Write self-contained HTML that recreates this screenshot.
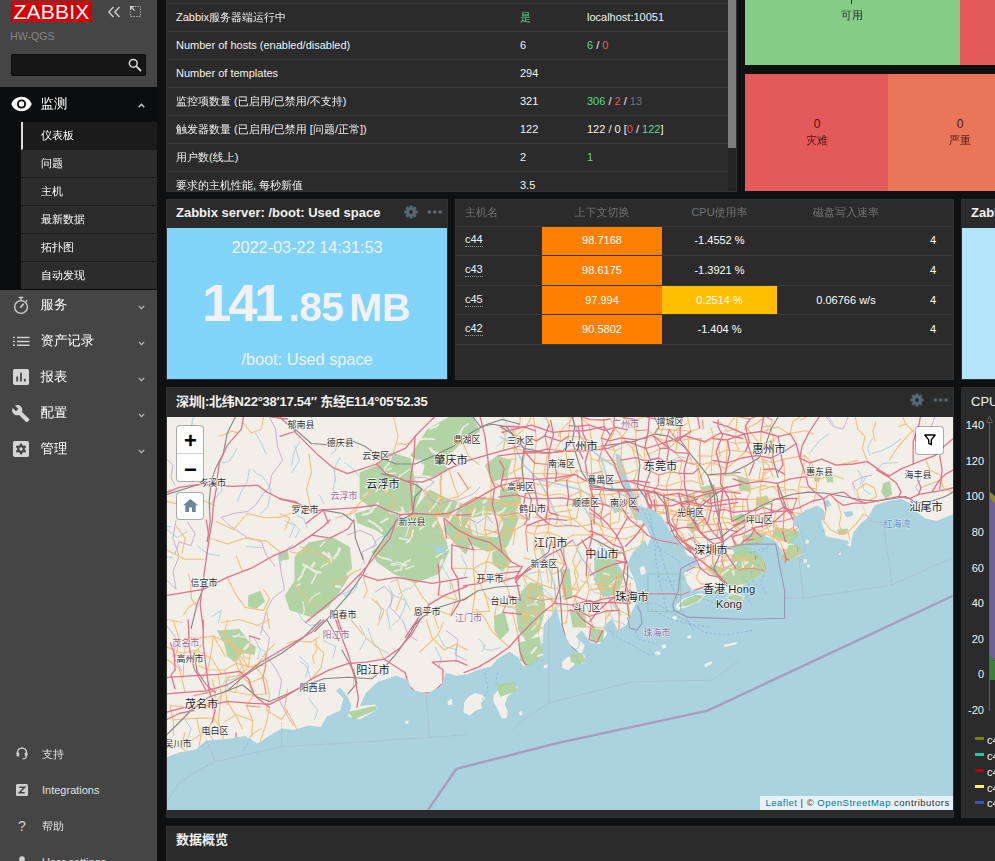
<!DOCTYPE html>
<html lang="zh-CN">
<head>
<meta charset="utf-8">
<title>Zabbix Dashboard</title>
<style>
*{box-sizing:border-box;margin:0;padding:0}
html,body{width:995px;height:861px;overflow:hidden;background:#0e1012}
body{position:relative;font-family:"Liberation Sans","WenQuanYi Zen Hei","Noto Sans CJK SC",sans-serif;font-size:11px;color:#f2f2f2;line-height:1}
.abs{position:absolute}
/* sidebar */
#sb{position:absolute;left:0;top:0;width:157px;height:861px;background:#454545;overflow:hidden}
#logo{position:absolute;left:11px;top:1px;width:81px;height:21px;background:#d40000;color:#fff;font-size:21px;line-height:22px;text-align:center;letter-spacing:.2px}
#srv{position:absolute;left:10px;top:30px;font-size:10.6px;color:#858585;line-height:12px}
#search{position:absolute;left:11px;top:54px;width:135px;height:22px;background:#161616;border:1px solid #0c0c0c;border-radius:2px}
.mrow{position:absolute;left:0;width:157px;height:36px}
.mrow .t{position:absolute;left:40.5px;top:11px;font-size:13.4px;line-height:14px;color:#fff}
.mrow svg.ic{position:absolute}
.car{position:absolute;left:138px;width:7px;height:5px}
.sub{position:absolute;left:21px;width:136px;height:28px;background:#2c2c2c;border-bottom:1px solid #191919;font-size:11px;line-height:27px;padding-left:20px;color:#fff}
.sub.sel{background:#1b1b1b;border-left:2px solid #dcdcdc;padding-left:18px}
.brow{position:absolute;left:0;width:157px;height:36px}
.brow .t{position:absolute;left:42px;top:12px;font-size:11px;line-height:12px;color:#e0e0e0}
/* widgets */
.w{position:absolute;background:#2b2b2b;border:1px solid #303030;overflow:hidden}
.wh{position:absolute;left:9px;font-family:"Liberation Sans","Noto Sans CJK SC",sans-serif;font-weight:bold;font-size:13px;line-height:14px;color:#f2f2f2;white-space:nowrap}
.row{position:absolute;left:0;height:28px;border-top:1px solid #383838;line-height:27px;white-space:nowrap}
.row span{position:absolute;top:0}
i{font-style:normal}
.g{color:#59db8f}.r{color:#e45959}.gy{color:#737373}
.cell{position:absolute;text-align:center;line-height:29px;font-size:11px;color:#fff;white-space:nowrap}
.lc{background:#fff;border:1px solid rgba(0,0,0,.28);border-radius:4px;background-clip:padding-box}
.lt{width:27px;height:28px;text-align:center;font:bold 22px/26px "Liberation Sans",sans-serif;color:#000}
.hl{position:absolute;height:1px;background:#383838}
.hn{line-height:27px;color:#f2f2f2}
.hn::after{content:"";position:absolute;left:0;right:0;top:20px;border-bottom:1px dotted #9a9a9a}
</style>
</head>
<body>

<!-- ============ SIDEBAR ============ -->
<div id="sb">
  <div id="logo">ZABBIX</div>
  <svg class="abs" style="left:107px;top:6px" width="14" height="12" viewBox="0 0 14 12"><path d="M6.5 1 L1.8 6 L6.5 11 M12.5 1 L7.8 6 L12.5 11" fill="none" stroke="#c8c8c8" stroke-width="1.5"/></svg>
  <svg class="abs" style="left:129px;top:5px" width="13" height="13" viewBox="0 0 13 13"><path d="M5.5 1.5H11.5V11.5H1.5V6.5" fill="none" stroke="#b0b0b0" stroke-width="1" stroke-dasharray="1.5 1.2"/><path d="M1 1H5V2.2H3.1L6 5.1L5.1 6L2.2 3.1V5H1Z" fill="#d0d0d0"/></svg>
  <div id="srv">HW-QGS</div>
  <div id="search"></div>
  <svg class="abs" style="left:128px;top:58px" width="14" height="14" viewBox="0 0 14 14"><circle cx="5.3" cy="5.3" r="3.9" fill="none" stroke="#dcdcdc" stroke-width="1.5"/><path d="M8.2 8.2L13 13" stroke="#dcdcdc" stroke-width="1.8"/></svg>

  <!-- active section -->
  <div class="abs" style="left:0;top:87px;width:157px;height:203px;background:#0b0c0d"></div>
  <div class="mrow" style="top:87px">
    <svg class="ic" style="left:11px;top:9px" width="21" height="16" viewBox="0 0 21 16"><path d="M10.5 0.8C5.8 0.8 1.9 3.7 0.3 8c1.6 4.3 5.5 7.2 10.2 7.2S19.1 12.300 20.700 8C19.1 3.7 15.2 0.8 10.5 0.8z" fill="#fff"/><circle cx="10.500" cy="8" r="4.600" fill="#0b0c0d"/><circle cx="10.500" cy="8" r="2.700" fill="#fff"/></svg>
    <div class="t" style="top:10px">监测</div>
    <svg class="car" style="top:16px" viewBox="0 0 7 5"><path d="M0.700 4.300L3.500 1.300L6.300 4.300" fill="none" stroke="#cfcfcf" stroke-width="1.300"/></svg>
  </div>
  <div class="sub sel" style="top:122px">仪表板</div>
  <div class="sub" style="top:150px">问题</div>
  <div class="sub" style="top:178px">主机</div>
  <div class="sub" style="top:206px">最新数据</div>
  <div class="sub" style="top:234px">拓扑图</div>
  <div class="sub" style="top:262px;height:27px;border-bottom:0">自动发现</div>

  <div class="mrow" style="top:287px">
    <svg class="ic" style="left:12px;top:9px" width="18" height="19" viewBox="0 0 18 19"><circle cx="9" cy="11" r="6.400" fill="none" stroke="#cfcfcf" stroke-width="1.400"/><path d="M6.800 1.500H11.200" stroke="#cfcfcf" stroke-width="1.500"/><path d="M9 1.500V4.500" stroke="#cfcfcf" stroke-width="1.200"/><path d="M8.300 11.700L11.600 7.800" stroke="#cfcfcf" stroke-width="1.700"/><path d="M13.800 5.600L15.200 4.200" stroke="#cfcfcf" stroke-width="1.400"/></svg>
    <div class="t">服务</div>
    <svg class="car" style="top:18px" viewBox="0 0 7 5"><path d="M0.900 1L3.500 3.700L6.100 1" fill="none" stroke="#b8b8b8" stroke-width="1.150"/></svg>
  </div>
  <div class="mrow" style="top:323px">
    <svg class="ic" style="left:12.500px;top:13px" width="17" height="11" viewBox="0 0 17 11"><path d="M0 1.500H1.800M4 1.500H16.500M0 5.400H1.800M4 5.400H16.500M0 9.300H1.800M4 9.300H16.500" stroke="#d0d0d0" stroke-width="1.500"/></svg>
    <div class="t">资产记录</div>
    <svg class="car" style="top:18px" viewBox="0 0 7 5"><path d="M0.900 1L3.500 3.700L6.100 1" fill="none" stroke="#b8b8b8" stroke-width="1.150"/></svg>
  </div>
  <div class="mrow" style="top:359px">
    <svg class="ic" style="left:13px;top:10px" width="16" height="16" viewBox="0 0 16 16"><rect x="0" y="0" width="16" height="16" rx="1.800" fill="#d6d6d6"/><path d="M4.200 12.500V7.500M8 12.500V3.800M11.800 12.500V9.800" stroke="#454545" stroke-width="1.800"/></svg>
    <div class="t">报表</div>
    <svg class="car" style="top:18px" viewBox="0 0 7 5"><path d="M0.900 1L3.500 3.700L6.100 1" fill="none" stroke="#b8b8b8" stroke-width="1.150"/></svg>
  </div>
  <div class="mrow" style="top:395px">
    <svg class="ic" style="left:12px;top:9px" width="18" height="18" viewBox="0 0 18 18"><path d="M17.200 15.100L10 7.900c0.700-1.800 0.300-3.900-1.200-5.400C7.200 0.900 4.900 0.600 3 1.500l3.400 3.400L4 7.300 0.600 3.900C-0.300 5.800 0 8.100 1.600 9.700c1.500 1.500 3.600 1.900 5.400 1.200l7.200 7.200c0.300 0.300 0.800 0.300 1.100 0l1.900-1.900C17.500 15.900 17.500 15.400 17.200 15.100z" fill="#d6d6d6"/></svg>
    <div class="t">配置</div>
    <svg class="car" style="top:18px" viewBox="0 0 7 5"><path d="M0.900 1L3.500 3.700L6.100 1" fill="none" stroke="#b8b8b8" stroke-width="1.150"/></svg>
  </div>
  <div class="mrow" style="top:431px">
    <svg class="ic" style="left:13px;top:10px" width="16" height="16" viewBox="0 0 16 16"><rect x="0" y="0" width="16" height="16" rx="1.800" fill="#d6d6d6"/><g transform="translate(8 8)" fill="#454545"><circle r="3.900"/><rect x="-1.100" y="-5.400" width="2.200" height="10.800"/><rect x="-1.100" y="-5.400" width="2.200" height="10.800" transform="rotate(60)"/><rect x="-1.100" y="-5.400" width="2.200" height="10.800" transform="rotate(120)"/><circle r="1.700" fill="#d6d6d6"/></g></svg>
    <div class="t">管理</div>
    <svg class="car" style="top:18px" viewBox="0 0 7 5"><path d="M0.900 1L3.500 3.700L6.100 1" fill="none" stroke="#b8b8b8" stroke-width="1.150"/></svg>
  </div>

  <div class="brow" style="top:736px">
    <svg class="abs" style="left:16px;top:11px" width="12" height="13" viewBox="0 0 12 13"><path d="M1.500 7V5.500a4.500 4.500 0 0 1 9 0V7" fill="none" stroke="#d0d0d0" stroke-width="1.500"/><rect x="0.600" y="5.500" width="2.600" height="4" rx="0.800" fill="#d0d0d0"/><rect x="8.800" y="5.500" width="2.600" height="4" rx="0.800" fill="#d0d0d0"/><path d="M10.300 9.500c0 1.800-1.500 2.400-3.800 2.400" fill="none" stroke="#d0d0d0" stroke-width="1.100"/></svg>
    <div class="t">支持</div>
  </div>
  <div class="brow" style="top:772px">
    <svg class="abs" style="left:16px;top:12px" width="12" height="12" viewBox="0 0 12 12"><rect width="12" height="12" rx="1.500" fill="#d0d0d0"/><path d="M3.300 3.200H8.700L3.300 8.800H8.700" fill="none" stroke="#454545" stroke-width="1.500"/></svg>
    <div class="t">Integrations</div>
  </div>
  <div class="brow" style="top:808px">
    <div class="abs" style="left:18px;top:10px;font-size:14px;line-height:16px;color:#d0d0d0">?</div>
    <div class="t">帮助</div>
  </div>
  <div class="brow" style="top:844px">
    <svg class="abs" style="left:16px;top:12px" width="12" height="12" viewBox="0 0 12 12"><circle cx="6" cy="3" r="2.800" fill="#d0d0d0"/><path d="M0.500 12c0-3.500 2.500-5 5.500-5s5.500 1.500 5.500 5z" fill="#d0d0d0"/></svg>
    <div class="t">User settings</div>
  </div>
</div>

<!-- ============ WIDGET: system info ============ -->
<div class="w" style="left:166px;top:-10px;width:571px;height:202px" id="w1">
  <div class="row" style="top:12px;width:561px"><span style="left:9px">Zabbix服务器端运行中</span><span class="g" style="left:353px">是</span><span style="left:420px">localhost:10051</span></div>
  <div class="row" style="top:40px;width:561px"><span style="left:9px">Number of hosts (enabled/disabled)</span><span style="left:353px">6</span><span style="left:420px"><i class="g">6</i> / <i class="r">0</i></span></div>
  <div class="row" style="top:68px;width:561px"><span style="left:9px">Number of templates</span><span style="left:353px">294</span></div>
  <div class="row" style="top:96px;width:561px"><span style="left:9px">监控项数量 (已启用/已禁用/不支持)</span><span style="left:353px">321</span><span style="left:420px"><i class="g">306</i> / <i class="r">2</i> / <i class="gy">13</i></span></div>
  <div class="row" style="top:124px;width:561px"><span style="left:9px">触发器数量 (已启用/已禁用 [问题/正常])</span><span style="left:353px">122</span><span style="left:420px">122 / 0 [<i class="r">0</i> / <i class="g">122</i>]</span></div>
  <div class="row" style="top:152px;width:561px"><span style="left:9px">用户数(线上)</span><span style="left:353px">2</span><span class="g" style="left:420px">1</span></div>
  <div class="row" style="top:180px;width:561px"><span style="left:9px">要求的主机性能, 每秒新值</span><span style="left:353px">3.5</span></div>
  <div class="abs" style="left:561px;top:0;width:8px;height:202px;background:#252527"></div>
  <div class="abs" style="left:561px;top:0;width:8px;height:157px;background:#7c7c7e"></div>
</div>

<!-- ============ WIDGET: host availability / severity ============ -->
<div class="abs" style="left:745px;top:0;width:215px;height:65px;background:#86cc89"></div>
<div class="abs" style="left:960px;top:0;width:35px;height:65px;background:#e45959"></div>
<div class="abs" style="left:851px;top:-4px;width:1px;height:8px;background:#1f2a1f"></div>
<div class="abs" style="left:812px;top:9px;width:80px;text-align:center;font-size:11px;line-height:12px;color:#1f2a1f">可用</div>
<div class="abs" style="left:745px;top:74px;width:143px;height:117px;background:#e45959"></div>
<div class="abs" style="left:888px;top:74px;width:107px;height:117px;background:#e97659"></div>
<div class="abs" style="left:777px;top:118px;width:80px;text-align:center;font-size:12px;line-height:13px;color:#4b1111">0</div>
<div class="abs" style="left:777px;top:134px;width:80px;text-align:center;font-size:11px;line-height:12px;color:#4b1111">灾难</div>
<div class="abs" style="left:920px;top:118px;width:80px;text-align:center;font-size:12px;line-height:13px;color:#4b1a11">0</div>
<div class="abs" style="left:920px;top:134px;width:80px;text-align:center;font-size:11px;line-height:12px;color:#4b1a11">严重</div>

<!-- ============ WIDGET: item value ============ -->
<div class="w" style="left:166px;top:199px;width:282px;height:181px">
  <div class="wh" style="top:6px">Zabbix server: /boot: Used space</div>
  <svg class="abs" style="left:237.2px;top:5.4px" width="14" height="14" viewBox="-7 -7 14 14"><g fill="#5a6a73"><rect x="-1.500" y="-6.600" width="3" height="13.200" rx=".3" transform="rotate(0)"/><rect x="-1.500" y="-6.600" width="3" height="13.200" rx=".3" transform="rotate(45)"/><rect x="-1.500" y="-6.600" width="3" height="13.200" rx=".3" transform="rotate(90)"/><rect x="-1.500" y="-6.600" width="3" height="13.200" rx=".3" transform="rotate(135)"/><circle r="4.700"/></g><circle r="1.900" fill="#2b2b2b"/></svg><svg class="abs" style="left:259.5px;top:10px" width="16" height="4" viewBox="0 0 16 4"><g fill="#5a6a73"><circle cx="2.300" cy="2" r="1.800"/><circle cx="7.700" cy="2" r="1.800"/><circle cx="13.100" cy="2" r="1.800"/></g></svg>
  <div class="abs" style="left:0;top:28px;width:280px;height:151px;background:#81d4fa"></div>
  <div class="abs" style="left:0;top:38px;width:280px;text-align:center;font-size:16.3px;line-height:18px;color:#f2f2f2">2022-03-22 14:31:53</div>
  <div class="abs" style="left:0;top:73px;width:280px;padding-left:35.3px;font-weight:bold;color:#f2f2f2;white-space:nowrap;line-height:60px"><span style="font-size:52.5px;letter-spacing:-3.2px">141</span><span style="font-size:40.5px;letter-spacing:-.5px;margin-left:8.2px">.85</span><span style="font-size:39.5px;letter-spacing:-.3px;margin-left:6px">MB</span></div>
  <div class="abs" style="left:0;top:150px;width:280px;text-align:center;font-size:16.3px;line-height:18px;color:#f2f2f2">/boot: Used space</div>
</div>

<!-- ============ WIDGET: data table ============ -->
<div class="w" style="left:455px;top:199px;width:499px;height:181px" id="w3">
  <div class="abs gy" style="left:9px;top:6px;line-height:13px">主机名</div>
  <div class="abs gy" style="left:86px;top:6px;width:120px;text-align:center;line-height:13px">上下文切换</div>
  <div class="abs gy" style="left:206px;top:6px;width:115px;text-align:center;line-height:13px">CPU使用率</div>
  <div class="abs gy" style="left:321px;top:6px;width:138px;text-align:center;line-height:13px">磁盘写入速率</div>
  <div class="hl" style="left:0;top:26px;width:497px"></div>
  <div class="hl" style="left:0;top:55px;width:497px"></div>
  <div class="hl" style="left:0;top:85px;width:497px"></div>
  <div class="hl" style="left:0;top:114px;width:497px"></div>
  <div class="hl" style="left:0;top:144px;width:497px"></div>
  <div class="abs hn" style="left:9px;top:26px">c44</div>
  <div class="abs hn" style="left:9px;top:56px">c43</div>
  <div class="abs hn" style="left:9px;top:86px">c45</div>
  <div class="abs hn" style="left:9px;top:115px">c42</div>
  <div class="cell" style="left:86px;top:27px;width:120px;height:28px;line-height:27px;background:#ff8000">98.7168</div>
  <div class="cell" style="left:86px;top:56px;width:120px;height:29px;background:#ff8000">98.6175</div>
  <div class="cell" style="left:86px;top:86px;width:120px;height:28px;background:#ff8000">97.994</div>
  <div class="cell" style="left:86px;top:115px;width:120px;height:29px;background:#ff8000">90.5802</div>
  <div class="cell" style="left:206px;top:27px;width:115px;height:28px;line-height:27px">-1.4552 %</div>
  <div class="cell" style="left:206px;top:56px;width:115px;height:29px">-1.3921 %</div>
  <div class="cell" style="left:206px;top:86px;width:115px;height:28px;background:#ffbf00">0.2514 %</div>
  <div class="cell" style="left:206px;top:115px;width:115px;height:29px">-1.404 %</div>
  <div class="cell" style="left:321px;top:86px;width:138px;height:28px">0.06766 w/s</div>
  <div class="cell" style="left:459px;top:27px;width:36px;height:28px;line-height:27px">4</div>
  <div class="cell" style="left:459px;top:56px;width:36px;height:29px">4</div>
  <div class="cell" style="left:459px;top:86px;width:36px;height:28px">4</div>
  <div class="cell" style="left:459px;top:115px;width:36px;height:29px">4</div>
</div>

<!-- ============ WIDGET: right partial (item value) ============ -->
<div class="w" style="left:961px;top:199px;width:60px;height:181px">
  <div class="wh" style="top:6px">Zabbix</div>
  <div class="abs" style="left:0;top:28px;width:60px;height:151px;background:#b3e5fc"></div>
</div>

<!-- ============ WIDGET: map ============ -->
<div class="w" style="left:166px;top:387px;width:788px;height:431px" id="wmap">
  <div class="wh" style="top:7px;letter-spacing:-.24px">深圳|:北纬N22°38′17.54″ 东经E114°05′52.35</div>
  <svg class="abs" style="left:743.3px;top:5px" width="14" height="14" viewBox="-7 -7 14 14"><g fill="#5a6a73"><rect x="-1.500" y="-6.600" width="3" height="13.200" rx=".3" transform="rotate(0)"/><rect x="-1.500" y="-6.600" width="3" height="13.200" rx=".3" transform="rotate(45)"/><rect x="-1.500" y="-6.600" width="3" height="13.200" rx=".3" transform="rotate(90)"/><rect x="-1.500" y="-6.600" width="3" height="13.200" rx=".3" transform="rotate(135)"/><circle r="4.700"/></g><circle r="1.900" fill="#2b2b2b"/></svg><svg class="abs" style="left:765.5px;top:10px" width="16" height="4" viewBox="0 0 16 4"><g fill="#5a6a73"><circle cx="2.300" cy="2" r="1.800"/><circle cx="7.700" cy="2" r="1.800"/><circle cx="13.100" cy="2" r="1.800"/></g></svg>
<!--MAP-START-->
<svg class="abs" style="left:0;top:29px" width="786" height="393" viewBox="167 417 786 393" font-family="'Liberation Sans','Noto Sans CJK SC',sans-serif">
<defs><clipPath id="land"><path d="M167 757.2 L179.1 752.6 L195.6 749.6 L206.2 740.6 L227.3 739.1 L245.4 736.1 L257.4 743.6 L266.5 737.6 L281.6 728.5 L293.6 730 L308.7 725.5 L320.8 727 L326.8 716.5 L340.3 710.4 L343.4 698.4 L335.8 690.8 L340.3 687.8 L347.9 696.9 L351.5 705.9 L347.9 716.5 L359.9 719.5 L378 708.9 L375 704.4 L359.9 705.9 L366 692.4 L378 681.8 L396.1 675.8 L408.2 680.3 L411.2 689.3 L426.3 693.9 L441.3 686.3 L445.9 672.8 L456.4 675.8 L467 674.3 L467.1 674.2 L479.2 669.6 L491.3 666.6 L497.3 659.1 L509.3 651.5 L518.4 657.6 L522.9 666.6 L536.5 660.6 L542.5 642.5 L544 624.4 L551.5 615.4 L556.1 604.8 L559.1 618.4 L563.6 633.5 L572.6 648.5 L581.7 654.6 L584.7 645.5 L575.7 636.5 L581.7 630.4 L590.7 642.5 L599.8 644 L607.3 633.5 L602.8 627.4 L611.8 618.4 L617.9 630.4 L626.9 624.4 L632.9 609.3 L637.5 600.3 L636 585.2 L632.9 576.2 L626.9 564.1 L632.9 552.1 L645 540 L647.5 546.3 L650.8 537.5 L645.3 524.2 L637.5 517.6 L639.7 506.5 L651.9 508.7 L660.7 515.4 L667.4 526.4 L674 537.5 L682.9 546.3 L687.3 555.2 L693.9 557.4 L698.3 564 L689.5 568.4 L684 572.9 L687.3 583.9 L693.9 590.5 L709.4 590.5 L722.7 590.5 L731.5 595 L744.8 583.9 L758 577.3 L766.9 568.4 L762.5 557.4 L749.2 554.1 L742.6 557.4 L733.7 553 L731.5 546.3 L744.8 544.1 L758 544.1 L752.9 538.5 L766.2 536.3 L775 540.7 L781.6 549.6 L785 562.9 L792.7 558.4 L803.7 554 L797.1 545.2 L788.3 543 L799.3 529.7 L792.7 523.1 L794.9 516.4 L808.2 509.8 L817 505.4 L823.6 509.8 L821.4 520.9 L825.9 536.3 L836.9 538.5 L848 540.7 L850.2 546.3 L853.5 531.9 L861.2 523.1 L867.9 517.5 L874.5 505.4 L887.8 501 L901 498.7 L909.9 503.2 L916.5 512 L925.4 518.6 L936.4 520.9 L953 514.2 L953 417 L953 400 L167 400 Z"/></clipPath></defs>
<rect x="167" y="417" width="786" height="393" fill="#aad3df"/>
<path d="M167 757.2 L179.1 752.6 L195.6 749.6 L206.2 740.6 L227.3 739.1 L245.4 736.1 L257.4 743.6 L266.5 737.6 L281.6 728.5 L293.6 730 L308.7 725.5 L320.8 727 L326.8 716.5 L340.3 710.4 L343.4 698.4 L335.8 690.8 L340.3 687.8 L347.9 696.9 L351.5 705.9 L347.9 716.5 L359.9 719.5 L378 708.9 L375 704.4 L359.9 705.9 L366 692.4 L378 681.8 L396.1 675.8 L408.2 680.3 L411.2 689.3 L426.3 693.9 L441.3 686.3 L445.9 672.8 L456.4 675.8 L467 674.3 L467.1 674.2 L479.2 669.6 L491.3 666.6 L497.3 659.1 L509.3 651.5 L518.4 657.6 L522.9 666.6 L536.5 660.6 L542.5 642.5 L544 624.4 L551.5 615.4 L556.1 604.8 L559.1 618.4 L563.6 633.5 L572.6 648.5 L581.7 654.6 L584.7 645.5 L575.7 636.5 L581.7 630.4 L590.7 642.5 L599.8 644 L607.3 633.5 L602.8 627.4 L611.8 618.4 L617.9 630.4 L626.9 624.4 L632.9 609.3 L637.5 600.3 L636 585.2 L632.9 576.2 L626.9 564.1 L632.9 552.1 L645 540 L647.5 546.3 L650.8 537.5 L645.3 524.2 L637.5 517.6 L639.7 506.5 L651.9 508.7 L660.7 515.4 L667.4 526.4 L674 537.5 L682.9 546.3 L687.3 555.2 L693.9 557.4 L698.3 564 L689.5 568.4 L684 572.9 L687.3 583.9 L693.9 590.5 L709.4 590.5 L722.7 590.5 L731.5 595 L744.8 583.9 L758 577.3 L766.9 568.4 L762.5 557.4 L749.2 554.1 L742.6 557.4 L733.7 553 L731.5 546.3 L744.8 544.1 L758 544.1 L752.9 538.5 L766.2 536.3 L775 540.7 L781.6 549.6 L785 562.9 L792.7 558.4 L803.7 554 L797.1 545.2 L788.3 543 L799.3 529.7 L792.7 523.1 L794.9 516.4 L808.2 509.8 L817 505.4 L823.6 509.8 L821.4 520.9 L825.9 536.3 L836.9 538.5 L848 540.7 L850.2 546.3 L853.5 531.9 L861.2 523.1 L867.9 517.5 L874.5 505.4 L887.8 501 L901 498.7 L909.9 503.2 L916.5 512 L925.4 518.6 L936.4 520.9 L953 514.2 L953 417 L953 400 L167 400 Z" fill="#f2efe9"/>
<polygon points="675.1,606.5 678.4,602.7 682.9,598.9 689.5,596.7 696.1,593.9 701.7,593.2 705.4,595 702.8,598.3 698.8,602 693.5,603.8 687.3,607.1 681.8,608.2 678.4,610.4" fill="#f2efe9"/>
<polygon points="725.3,597.6 729.3,595 734.8,593.9 740.3,594.5 744.8,596.3 743,600.1 738.1,599.4 733.7,601.2 728.8,600.5" fill="#f2efe9"/>
<polygon points="464.1,702.8 468.6,696.8 474.7,693.2 482.2,694.4 485.2,698.3 480.7,702.8 482.2,708.8 476.2,710.3 470.1,715.5 463.5,712.4" fill="#f2efe9"/>
<polygon points="493.7,695.3 498.8,689.2 504.8,685.3 513.9,683.5 517.8,687.7 512.4,692.2 507.8,696.8 504.8,704.3 507.8,711.8 506.9,717.9 501.8,718.5 498.8,711.8 495.8,705.8 492.8,699.8" fill="#f2efe9"/>
<polygon points="562.1,662.1 566.6,657.6 572.6,655.2 577.2,659.1 574.2,665.1 568.1,670.2 562.1,668.1" fill="#f2efe9"/>
<polygon points="578.1,654 584.1,654.6 586.2,660 581.7,664.2 578.1,660.6" fill="#f2efe9"/>
<polygon points="639.6,567.7 644.4,565.9 646.2,573.2 641.4,575.6" fill="#f2efe9"/>
<polygon points="654.7,652.1 659.5,650.9 660.7,654.6 655.9,655.8" fill="#f2efe9"/>
<polygon points="661.6,645.5 665.5,644.3 666.1,647.9 662.5,648.5" fill="#f2efe9"/>
<polygon points="704.1,664.2 711.3,661.2 712.5,663.6 705.3,667.2" fill="#f2efe9"/>
<polygon points="723.4,644.9 737,641.9 736.1,644.3 724.9,647" fill="#f2efe9"/>
<polygon points="687.2,635.9 690.8,635 691.4,638 687.8,638.6" fill="#f2efe9"/>
<polygon points="672.1,616.9 675.8,615.4 677,619 673.3,619.9" fill="#f2efe9"/>
<polygon points="544,665.1 547.9,664.2 547.3,668.1 543.7,668.4" fill="#f2efe9"/>
<polygon points="447.5,701.3 450.6,699.8 451.5,704.3 448.1,705.2" fill="#f2efe9"/>
<polygon points="519,711.8 522,711.2 522.6,714.9 519.6,715.5" fill="#f2efe9"/>
<polygon points="806,539.6 809.3,540.7 808.2,544.1 804.9,543" fill="#f2efe9"/>
<polygon points="846.9,544.1 851.3,543 850.2,547.4" fill="#f2efe9"/>
<polygon points="838.7,552.9 840.9,552.5 841.1,554.5 838.9,554.7" fill="#f2efe9"/>
<polygon points="803.3,559.5 806.4,558.9 807.1,562.4 803.7,562.9" fill="#f2efe9"/>
<polygon points="807.1,565.1 809.5,564.6 809.7,567.3 807.3,567.5" fill="#f2efe9"/>
<polygon points="689.9,586.6 693.9,584.4 696.1,588.3 692.1,590.5" fill="#f2efe9"/>
<polygon points="639.7,567.3 643.5,566.2 644.4,572.9 640.9,574.6" fill="#f2efe9"/>
<polygon points="448.9,699.9 451.9,699 452.5,704.4 449.5,705" fill="#f2efe9"/>
<polygon points="405.2,721 408.2,720.4 408.5,723.4 405.5,723.7" fill="#f2efe9"/>
<g fill="#add19e" opacity=".92">
<polygon points="359.6,472.5 376.5,465.2 393.4,453.2 410.2,458 415.1,479.7 422.3,489.4 415.1,508.7 434.4,513.5 441.6,528 448.8,552.1 439.2,573.8 415.1,583.4 393.4,573.8 376.5,561.7 371.7,552.1 386.1,537.6 376.5,530.4 357.2,523.1 354.8,513.5 371.7,508.7 359.6,499 359.6,484.5"/>
<polygon points="294.5,556.9 308.9,542.4 333.1,537.6 349.9,547.2 352.4,571.4 340.3,590.7 328.2,607.5 311.4,617.2 289.6,610 284.8,595.5 294.5,581"/>
<polygon points="427.1,429.1 448.8,417 473,417 480.2,431.5 463.3,441.1 453.7,450.8 439.2,460.4 424.7,465.2 410.2,455.6 419.9,441.1"/>
<polygon points="485,465.2 497.1,455.6 511.5,460.4 506.7,477.3 492.3,482.1"/>
<polygon points="446.4,520.7 458.5,525.5 470.5,544.8 465.7,554.5 453.7,542.4 444,530.4"/>
<polygon points="415.1,508.7 429.5,489.4 448.8,499 463.3,503.8 448.8,518.3 434.4,515.9"/>
<polygon points="530.4,582.2 542.5,585.2 545.5,609.3 539.5,630.4 527.4,642.5 518.4,630.4 515.4,606.3 521.4,591.3"/>
<polygon points="519.9,642.5 539.5,636.5 544,654.6 530.4,666.6 519.9,660.6"/>
<polygon points="596.8,561.1 614.9,558.1 623.9,576.2 617.9,594.3 602.8,597.3 593.8,579.2"/>
<polygon points="560.6,570.1 569.6,568.6 572.6,597.3 563.6,600.3"/>
<polygon points="569.6,609.3 584.7,607.8 586.2,627.4 572.6,627.4"/>
<polygon points="494.3,615.4 504.8,612.4 509.3,630.4 500.3,639.5 494.3,630.4"/>
<polygon points="590.7,627.4 604.3,630.4 602.8,642.5 590.7,641"/>
<polygon points="569.6,654.6 581.7,653.1 586.2,660.6 578.7,665.1 571.1,662.1"/>
<polygon points="495.8,684.7 515.4,681.7 516.9,690.7 500.3,696.8"/>
<polygon points="440,540 446,540 449,552.1 440,555.1"/>
<polygon points="216.7,630.6 239.4,629 248.4,641.1 255.9,647.1 254.4,654.7 242.4,653.2 234.8,662.2 227.3,656.2 224.3,644.1"/>
<polygon points="347.9,712 375,705.9 378,708.9 353.9,719.5"/>
<polygon points="731.5,555.2 744.8,546.3 762.5,557.4 766.9,568.4 758,577.3 744.8,583.9 731.5,586.1 722.7,581.7 713.8,575.1 705,568.4 713.8,564 722.7,568.4 731.5,564"/>
<polygon points="678.4,606.5 684,599.8 696.1,595 703.9,595.4 698.3,601.2 687.3,606"/>
<polygon points="726,597.2 733.7,594.5 743.7,596.7 742.1,600.1 731.5,600.7"/>
<polygon points="771.3,535.3 789,530.9 800,535.3 789,544.1"/>
<polygon points="731.5,517.6 742.6,513.2 749.2,522 738.1,526.4"/>
<polygon points="755.8,497.7 766.9,495.5 771.3,504.3 760.2,506.5"/>
<polygon points="687.3,524.2 696.1,519.8 700.5,528.6 691.7,533.1"/>
<polygon points="731.5,546.3 742.6,541.9 744.8,546.3 735.9,550.7"/>
<polygon points="594.4,557.4 605.5,555.2 612.1,572.9 603.3,583.9 594.4,577.3"/>
<polygon points="612.1,504.3 618.7,502.1 621,511 614.3,513.2"/>
<polygon points="775,527.5 797.1,529.7 799.3,534.1 783.9,538.5 772.8,534.1"/>
<polygon points="788.3,545.2 797.1,544.1 803.7,552.9 792.7,558.4 785,562.9 780.5,556.2 786.1,551.8"/>
<polygon points="741.8,536.3 755.1,531.9 766.2,534.1 761.7,543 746.3,545.2"/>
<polygon points="883.3,483.3 890,481.1 892.2,494.3 885.6,498.7 881.1,492.1"/>
<polygon points="814.8,476.6 820.3,477.7 819.2,482.2 813.7,481.1"/>
<polygon points="825.9,476.6 832.5,475.5 833.6,482.2 827,482.2"/>
<polygon points="737.4,476.6 748.5,478.8 750.7,492.1 739.6,489.9"/>
<polygon points="757.3,496.5 766.2,498.7 764,507.6 756.2,505.4"/>
<polygon points="836.9,529.7 848,528.6 846.9,534.1 839.1,535.2"/>
<polygon points="500,489.4 514.5,486.9 521.7,499 514.5,513.5 500,511.1"/>
<polygon points="700.2,486.9 714.7,484.5 717.1,494.2 705,499"/>
<polygon points="683.3,496.6 695.4,494.2 693,503.8 685.7,503.8"/>
<polygon points="248.4,595.4 260.5,590.8 265,601.4 255.9,608.9 247.8,605.9"/>
<polygon points="278.5,553.2 287.6,550.1 289.1,559.2 280.1,560.7"/>
<polygon points="463.3,503.8 485,496.6 509.1,501.4 518.8,518.3 511.5,537.6 506.7,547.2 487.4,552.1 468.1,542.4 448.8,523.1 453.7,513.5"/>
<polygon points="492.3,552.1 504.3,547.2 511.5,561.7 501.9,571.4 492.3,564.1"/>
<polygon points="424.7,465.2 439.2,460.4 448.8,468.9 434.4,477.3 422.3,474.9"/>
</g>
<g fill="none" stroke="#f2efe9" stroke-linecap="round" stroke-linejoin="round" opacity=".85">
<path d="M397.3 526.1 L401.5 521.5 L405 517.3 L406.9 512.9" stroke-width="1.5"/>
<path d="M405.4 569.1 L410.7 567.1 L414.2 566.1" stroke-width="1.2"/>
<path d="M396.2 562.9 L401.7 564.2 L405.7 565" stroke-width="3.2"/>
<path d="M376.4 490.8 L380 485.6" stroke-width="2.0"/>
<path d="M363 496.5 L367.4 492.7" stroke-width="1.2"/>
<path d="M398.5 516.6 L404.4 516 L409.4 513.5 L412.5 510" stroke-width="1.6"/>
<path d="M391.9 564.4 L395.9 563.9" stroke-width="2.7"/>
<path d="M385.7 491.8 L387.6 488.3" stroke-width="2.4"/>
<path d="M389.7 512.2 L394.3 512.3 L398.5 513 L403.9 512.3" stroke-width="2.7"/>
<path d="M406.9 542.6 L409.3 540.6 L411.7 536.1 L413.1 530.4" stroke-width="2.0"/>
<path d="M394.4 571 L401.1 569.7" stroke-width="1.5"/>
<path d="M399.9 538.3 L406.4 539.5 L409.4 540.9" stroke-width="2.0"/>
<path d="M381.3 522.3 L387.2 518.7" stroke-width="2.5"/>
<path d="M419.8 529.3 L423.2 526.5" stroke-width="1.8"/>
<path d="M384 471 L384.9 467.9 L388.9 463.5 L391.2 457" stroke-width="1.9"/>
<path d="M362.8 514.8 L365.8 514.1 L368.8 513.4" stroke-width="2.5"/>
<path d="M365.7 486.7 L371.4 487.1 L376.3 487.2" stroke-width="2.3"/>
<path d="M403.6 520.2 L403.9 513.4 L401.9 507.6" stroke-width="2.5"/>
<path d="M400.5 569.9 L402.8 565.4 L405.7 562.1 L410.2 560" stroke-width="1.7"/>
<path d="M392.8 485.8 L397.4 486.1" stroke-width="2.4"/>
<path d="M384.5 470.9 L390.9 468.4" stroke-width="1.8"/>
<path d="M370.7 511.9 L373.6 507.7 L377.7 503.5" stroke-width="2.9"/>
<path d="M413.5 494.9 L414 489.1 L414.6 484.9 L415.9 482.1" stroke-width="1.5"/>
<path d="M405.1 536.5 L407.8 530.8 L409 525.1 L411.3 520.5" stroke-width="1.3"/>
<path d="M376.1 554.6 L382.2 558 L388.4 559.2 L392.1 560.6" stroke-width="2.0"/>
<path d="M397.1 478.8 L400.6 475.2 L404.4 473.1 L409.8 468.7" stroke-width="1.4"/>
<path d="M436.2 557.1 L442 553.3 L447.2 550" stroke-width="1.8"/>
<path d="M440.3 564.6 L442.4 559.9" stroke-width="2.7"/>
<path d="M368.8 520.5 L374.4 523.8 L379 527.2 L382.1 530.9" stroke-width="2.3"/>
<path d="M432.9 526.3 L436.3 521.8" stroke-width="2.4"/>
<path d="M383.4 471.6 L387.7 473.4 L390.7 473.5 L395.8 473" stroke-width="1.3"/>
<path d="M347.7 574.1 L351.2 571.5" stroke-width="3.0"/>
<path d="M320.3 546.2 L324.6 541.9" stroke-width="1.7"/>
<path d="M331.2 563.2 L330.8 557.3 L328.6 552.8" stroke-width="1.7"/>
<path d="M298.2 579.8 L301.5 575.9 L302.8 572.3 L305.4 567.4" stroke-width="2.3"/>
<path d="M297 585.6 L300.2 584" stroke-width="1.7"/>
<path d="M333.9 558.3 L337.6 553.7 L339.6 548.6" stroke-width="2.8"/>
<path d="M309 602.9 L310.6 598.9 L315.4 594.8 L320 592.9" stroke-width="1.2"/>
<path d="M336.3 586.4 L340.1 586.7" stroke-width="2.9"/>
<path d="M349.1 574.4 L351.2 570.5" stroke-width="2.5"/>
<path d="M312.4 566.2 L314.1 563.3" stroke-width="2.8"/>
<path d="M323.3 552.8 L326.4 554.4 L329.2 556.7" stroke-width="3.1"/>
<path d="M321.2 567 L324.2 564.8 L328.2 563.4" stroke-width="1.4"/>
<path d="M303.3 614.1 L304.3 610.5 L303.6 605.5 L303 601.7" stroke-width="1.4"/>
<path d="M311.5 583.4 L313.7 579.1 L316.5 573.8 L318.3 571.3" stroke-width="1.7"/>
<path d="M303.4 564.7 L309.7 567.9 L314.8 571.5 L320.1 572.5" stroke-width="2.7"/>
<path d="M421.4 439.7 L424.4 438.6 L429.1 438.9 L434.4 439.4" stroke-width="1.9"/>
<path d="M430.2 448.6 L432.9 451.8 L436.6 453.3 L440.2 453" stroke-width="2.7"/>
<path d="M437.5 460.3 L440.6 459.2" stroke-width="2.2"/>
<path d="M457 439 L459.7 433.5 L463.1 427.4 L468 424" stroke-width="1.7"/>
<path d="M418.2 460 L423.4 461.4" stroke-width="1.6"/>
<path d="M429.7 428.5 L436 426.7 L438.3 424.5" stroke-width="2.4"/>
<path d="M457.5 443.5 L458.3 439.2 L460.9 433.4" stroke-width="1.3"/>
<path d="M445.2 511.6 L448.7 506.5 L451.2 501.4" stroke-width="2.3"/>
<path d="M451.1 516 L455.5 511.3 L456.6 508.2 L458.6 503.6" stroke-width="2.6"/>
<path d="M429.5 511.8 L433.1 507.2 L436.7 502.4 L439.8 496.7" stroke-width="1.6"/>
<path d="M535.2 601.9 L539.1 596.5" stroke-width="2.1"/>
<path d="M539.6 600.6 L542.1 597.5" stroke-width="1.9"/>
<path d="M527.3 605.6 L532.3 604.2 L537.5 604.6" stroke-width="1.6"/>
<path d="M530.9 615 L536.6 617.6" stroke-width="1.3"/>
<path d="M531.9 629.7 L536.6 625.2 L538.8 620.1" stroke-width="1.5"/>
<path d="M537.9 656 L542.7 654.5" stroke-width="1.9"/>
<path d="M531.8 652.7 L535.9 647.9" stroke-width="2.5"/>
<path d="M609.6 585.9 L613 583.9 L616.6 579.7" stroke-width="2.6"/>
<path d="M603.5 573.4 L609.2 574.8" stroke-width="1.8"/>
<path d="M594.3 577 L595.2 573.2" stroke-width="1.7"/>
<path d="M244.8 648.7 L249.3 643.8" stroke-width="3.1"/>
<path d="M232.4 636.2 L238.5 636 L244.5 637.4" stroke-width="1.3"/>
<path d="M234.3 637.2 L239.6 634.2" stroke-width="1.5"/>
<path d="M743.3 566.8 L743.1 560.6" stroke-width="2.9"/>
<path d="M721.7 574.8 L726.9 570.4 L732.2 566.7 L736.5 562.3" stroke-width="2.0"/>
<path d="M733.9 574.8 L733.1 570.3" stroke-width="2.1"/>
<path d="M751.7 568.4 L753.1 565.2" stroke-width="1.8"/>
<path d="M744.6 564.1 L747.5 562" stroke-width="2.5"/>
<path d="M461.3 507.3 L464.3 505.7" stroke-width="2.1"/>
<path d="M502.8 515.6 L508.8 515" stroke-width="2.8"/>
<path d="M475.8 515 L480.8 512.1 L487 511.8 L492.4 512.4" stroke-width="1.2"/>
<path d="M472 515.6 L474.2 511.9 L475.3 508.7" stroke-width="2.6"/>
<path d="M466.6 526.5 L469.5 522.4 L471.9 519.4" stroke-width="3.1"/>
<path d="M482.3 519.8 L483.1 513.3 L483.6 507.4" stroke-width="1.7"/>
<path d="M488.7 526.9 L490.8 521.3 L493.9 518.2" stroke-width="1.5"/>
<path d="M496.8 516.8 L501.9 516.8" stroke-width="1.4"/>
<path d="M494.9 513.7 L497.9 513.3 L502.4 511.3 L505.6 508.1" stroke-width="2.3"/>
<path d="M461 525.4 L460.2 519.4 L460.7 513.2" stroke-width="2.0"/>
<path d="M483.6 502.3 L487.5 498.7" stroke-width="3.0"/>
</g>
<g fill="#f2efe9" opacity=".9">
<polygon points="468.1,518.3 497.1,513.5 504.3,523.1 497.1,537.6 473,535.2"/>
</g>
<g fill="#aad3df">
<polygon points="615.3,453.2 620.6,455.6 625.4,472.5 631.5,489.4 637.5,503.8 644.7,513.5 654.4,520 635.1,520 630.2,508.7 625.4,496.6 620.6,479.7 617,465.2"/>
<polygon points="804.7,509.9 816.7,507.4 824,511.1 825.2,520 802.2,520"/>
<polygon points="823.6,501 828.1,499.8 831.4,505.4 825.9,507.6"/>
<polygon points="843.5,512 852.4,510.9 853.5,515.3 846.9,517.5"/>
<polygon points="434.4,547.2 444,546 446.4,552.1 436.8,554.5"/>
</g>
<g fill="none" stroke="#aad3df" stroke-width="1" stroke-linecap="round" stroke-linejoin="round">
<path d="M193.1 417 L191.1 429.1 L187.1 439.1"/>
<path d="M249.4 469.3 L247.4 481.3 L241.4 491.4 L237.4 501.4"/>
<path d="M299.7 441.1 L293.6 453.2 L291.6 465.2"/>
<path d="M255.4 433.1 L261.5 443.1 L265.5 453.2"/>
<path d="M167 529.6 L177.1 537.6 L187.1 531.6"/>
<path d="M291.6 521.5 L299.7 529.6 L295.6 537.6"/>
<path d="M197.2 545.6 L207.2 553.7 L219.3 555.7"/>
<path d="M339.9 457.2 L333.8 469.3 L335.8 481.3"/>
<path d="M319.8 495.4 L323.8 503.4"/>
<path d="M294.5 445.9 L299.3 460.4 L292.1 472.5"/>
<path d="M335.5 477.3 L333.1 489.4 L337.9 496.6"/>
<path d="M386.1 552.1 L393.4 561.7 L400.6 564.1"/>
<path d="M434.4 547.2 L444 552.1 L446.4 542.4"/>
<path d="M388.5 585.8 L393.4 595.5 L405.4 600.3 L410.2 610"/>
<path d="M376.5 600.3 L381.3 610 L378.9 620.1"/>
<path d="M497.1 445.9 L506.7 438.7 L520 436.3"/>
<path d="M284.8 520.7 L294.5 525.5 L289.6 537.6"/>
<path d="M254.4 638.1 L260.5 650.1 L257.4 659.2"/>
<path d="M299.6 656.2 L308.7 665.2 L305.7 677.3"/>
<path d="M359.9 626 L366 638.1 L359.9 650.1"/>
<path d="M435.3 647.1 L441.3 659.2 L438.3 668.2"/>
<path d="M308.7 698.4 L317.7 710.4 L314.7 719.5"/>
<path d="M236.3 656.2 L242.4 665.2 L239.4 671.3"/>
<path d="M185.1 719.5 L191.1 728.5 L188.1 737.6"/>
<path d="M479.2 639.5 L485.2 645.5 L482.2 651.5"/>
<path d="M461.1 555.1 L467.1 567.1 L464.1 576.2"/>
<path d="M524.4 585.2 L530.4 600.3 L527.4 615.4"/>
<path d="M539.5 570.1 L542.5 588.2 L539.5 603.3"/>
<path d="M828.8 433.9 L819.1 441.1 L809.5 453.2"/>
<path d="M872.2 438.7 L867.4 448.4 L869.8 455.6"/>
<path d="M901.1 438.7 L891.5 445.9 L881.8 450.8 L872.2 453.2"/>
<path d="M720.2 421.8 L727.5 431.5"/>
<path d="M857.7 470.1 L862.5 477.3 L860.1 484.5"/>
<path d="M828.8 417 L833.6 424.2"/>
<path d="M920.4 479.7 L915.6 486.9 L918 491.8"/>
<path d="M761.2 419.4 L768.5 426.6 L766.1 433.9"/>
<path d="M930.1 441.1 L925.3 448.4"/>
<path d="M212.2 616.5 L221.3 610.4 L218.3 622.5"/>
<path d="M323.8 640.6 L335.8 646.6 L332.8 658.7"/>
<path d="M438.3 634.6 L444.4 646.6 L456.4 649.6"/>
<path d="M257.4 646.6 L266.5 652.6 L263.5 661.7"/>
<g clip-path="url(#land)">
<path d="M422.6 462.2 L422.3 456.7 L423.4 446.3"/>
<path d="M337.5 444.1 L335.1 451.2 L330.6 454.8"/>
<path d="M344.1 595.7 L349.3 594.7 L355.8 589.5 L357.5 582.2 L360.1 574.1"/>
<path d="M607 611 L611.5 616.6 L614.5 621.1 L620.6 622.3 L627.2 626"/>
<path d="M415 584 L410.6 588.1 L405.3 589.4 L398.7 594"/>
<path d="M437.9 545.7 L430.4 545.7 L425.1 543.1"/>
<path d="M551.4 431 L547.5 421.5 L541.5 414.6 L537.1 407.3 L531.2 399.2"/>
<path d="M906.9 552.7 L906 545.9 L906.1 536.9"/>
<path d="M517.6 620.7 L517.6 612.9 L514.4 608.2 L504.9 606.5"/>
<path d="M270.9 489.3 L269.9 497 L267.7 507 L260.4 514.2"/>
<path d="M387.2 536.3 L381.3 536.7 L376.2 540.5 L372.8 547.7"/>
<path d="M629.5 493.6 L638.1 494.3 L643.7 493 L653.6 497.2"/>
<path d="M680.9 627.1 L673.8 625.2 L668.2 624.8 L663.1 623.1 L657.5 625.8"/>
<path d="M296.6 515.2 L304 518.8 L306.7 527.1"/>
<path d="M224.8 478.2 L222.4 484.9 L221.9 490.6 L214.6 498.8 L209.7 505"/>
<path d="M237 448.6 L232.3 456.5 L228.9 461.7 L221.8 463"/>
<path d="M708.3 676 L716.3 669.7 L722.5 667.7 L727.7 664.6"/>
<path d="M772.1 569.1 L775.7 561.2 L783.4 555.6 L785.9 549.7"/>
<path d="M482.5 644.9 L485.3 649.3 L492 650.2 L500.7 647.6"/>
<path d="M916.1 545.2 L922.6 548.2 L929 547.6 L934 544"/>
<path d="M656.8 672.1 L663.6 670.2 L673.6 670.1 L679.2 665.4"/>
<path d="M725 475.8 L731.8 474.6 L742 478.4 L749.3 479.7"/>
<path d="M908.5 622.9 L916.8 624.8 L925.7 626.2"/>
<path d="M647 586.8 L641.1 592.7 L641.9 602.5 L640 607.8"/>
<path d="M754.6 459 L760.1 462 L766.9 462.3"/>
<path d="M357.6 584.2 L354.3 588.4 L345.1 593.2 L335.4 595.1"/>
<path d="M573.1 651.6 L579.2 646.3 L579.2 638.6"/>
<path d="M312.8 421.1 L309.9 412.9 L305.3 410.1"/>
<path d="M702.2 568.6 L697.7 565.7 L692.5 565.6"/>
<path d="M246.2 546.6 L254.9 547.2 L262.9 547.9"/>
<path d="M710.3 546.7 L704 545.2 L694.1 542.6 L688.7 533.5"/>
<path d="M866.3 476.7 L862.3 483.2 L863.6 489.5 L871.1 494.5"/>
<path d="M781.5 671.2 L783.9 677.9 L788 682.1 L795.1 688.3 L805.4 688.3"/>
<path d="M297 607 L299.3 614.8 L302.7 619.9 L310 625.7 L318.2 624"/>
<path d="M513.6 425.1 L512 435.7 L517.6 444.7 L526.4 449.8 L532.9 448.4"/>
<path d="M876.6 470.8 L882.2 463.7 L889.6 462.9 L897.7 462.6"/>
<path d="M555.8 511.6 L559.7 521.2 L563.4 524.7 L570 524.9 L576.1 526.3"/>
<path d="M376.3 454.1 L386.7 453.3 L391.9 454 L401.2 459.3 L402.5 465.8"/>
<path d="M311.3 681 L309.3 674.6 L307.5 668.8 L304.8 664.5 L300.4 661.8"/>
<path d="M741.8 574.3 L747.5 579.4 L752.2 587 L754.4 595"/>
<path d="M863.2 691.7 L856.6 694 L847.6 691.7"/>
<path d="M666.1 533.3 L661.3 535.1 L651.1 536.4"/>
<path d="M506 435.5 L507.2 426.6 L505.5 420.3 L500.9 414.1"/>
<path d="M292.9 544.8 L286.2 549.8 L281.3 559.4 L280.4 566.4"/>
<path d="M170.8 526.9 L164.4 526.1 L159.9 522.9 L157.7 517.4 L156 510.3"/>
<path d="M403.7 596.3 L406.1 601.8 L403.2 611 L398.8 619.5 L392.7 624.7"/>
<path d="M391.7 593.2 L391.3 602 L386.8 610.8 L388.3 618.8 L390.1 628.7"/>
<path d="M797.6 651.4 L791.6 644.5 L786.8 642.6 L779.9 644.7 L774.5 653.1"/>
<path d="M605.7 595.8 L599.4 593.6 L594.2 592.3 L588.9 583.4 L581.1 581"/>
<path d="M751.7 552.7 L750.6 543.2 L745.7 535.8 L739.5 527.9"/>
<path d="M229.9 674.9 L226.1 682.9 L227.9 688.5"/>
<path d="M368.1 628.1 L370.5 635.6 L374.2 645.8 L379.7 648.8 L387.9 653.2"/>
<path d="M392.7 550.5 L388.1 540.6 L389.9 535.8 L392.6 526.3 L399.5 522.9"/>
<path d="M379.6 478.8 L382 473.8 L387.2 469.7"/>
<path d="M450.5 588.9 L450 579.7 L444.7 570.8 L442 566.4"/>
<path d="M172.8 557.7 L165.3 556.9 L159.7 557.7 L153.3 560.5"/>
<path d="M433.9 531.5 L444.3 531.5 L451 528.9"/>
<path d="M476.5 699.7 L474.1 690.4 L476.7 684.2 L473.1 676"/>
<path d="M665.3 461.7 L671.3 460.7 L681.2 456.6 L690.7 459.5"/>
<path d="M662.1 675.8 L665.5 671.4 L672.9 670.5 L678.7 670.9 L684.5 676.3"/>
<path d="M881.3 574 L886.1 578.9 L889.8 589.1 L896.1 595.4"/>
<path d="M404.7 576.1 L399.6 578.2 L390.6 582.1"/>
<path d="M599.3 546.8 L596.2 554.5 L596.6 560.5 L596.4 567.4"/>
<path d="M457.3 646.6 L456.2 654 L456.2 662.2"/>
<path d="M464 514.7 L470.2 518.3 L475.5 524.5 L477.4 534.4"/>
<path d="M242.2 671.1 L234.9 679 L224.9 681 L222.3 685.5 L214.3 692"/>
<path d="M539.1 584.4 L546.7 591.8 L552 597.5 L559.2 604"/>
<path d="M344.6 462.6 L352.2 468 L358.3 475.4"/>
<path d="M526.7 574.4 L536.9 572 L543.8 572.2"/>
<path d="M269.8 490.5 L268.5 485.1 L262.4 476.3 L256.4 473.6 L253.5 469.6"/>
</g></g>
<g fill="none" stroke="#aad3df" stroke-width="1.6" clip-path="url(#land)">
<path d="M572.4 417 L577.2 431.5 L586.8 445.9 L601.3 458 L613.4 465.2 L620.6 479.7"/>
<path d="M500 436.3 L514.5 445.9 L524.1 465.2 L538.6 479.7 L548.2 496.6 L557.9 520"/>
<path d="M538.6 479.7 L560.3 484.5 L579.6 489.4 L596.5 499 L613.4 508.7 L630.2 513.5"/>
<path d="M579.6 489.4 L582 503.8 L591.7 520"/>
<path d="M601.3 458 L606.1 474.9 L613.4 489.4 L625.4 496.6"/>
<path d="M556.1 604.8 L554.6 585.2 L548.5 567.1 L542.5 549 L539.5 540"/>
<path d="M572.6 540 L581.7 558.1 L596.8 579.2 L608.8 597.3 L620.9 615.4"/>
<path d="M596.8 540 L608.8 555.1 L620.9 570.1 L632.9 579.2"/>
</g>
<g fill="none" stroke="#a9a3c4" stroke-width=".7" stroke-dasharray="1.5 1.2" opacity=".8">
<path d="M206.2 739.1 L215.2 761.7"/>
<path d="M281.6 722.5 L281.6 746.6"/>
<path d="M426.3 695.4 L429.3 737.6"/>
<path d="M167 800.9 L179.1 782.8 L197.1 770.7 L215.2 761.7 L281.6 746.6 L335.8 743.6 L429.3 737.6 L467 734.6"/>
<path d="M548.5 615.4 L549.1 702.8 L632.9 681.7 L711.3 680.2 L740 660.6"/>
<path d="M549.1 702.8 L521.4 720.9 L512.4 729.9"/>
<path d="M852.4 483.3 L854.6 492.1 L859 498.7 L865.7 512 L870.1 520.9 L883.3 523.1 L892.2 585 L803.7 598.2 L799.3 562.9 L806 547.4 L801.5 531.9 L797.1 525.3"/>
<path d="M892.2 585 L953 557.3"/>
<path d="M785 598.2 L803.7 598.2"/>
</g>
<g fill="none" stroke="#7f9fe0" stroke-width=".7" stroke-dasharray="2.5 2" opacity=".75">
<path d="M640.9 504.3 L649.7 524.2 L658.5 546.3 L665.2 568.4 L674 590.5 L682.9 612.7 L693.9 630.3"/>
<path d="M649.7 513.2 L654.1 537.5 L656.3 564 L660.7 586.1 L667.4 612.7"/>
<path d="M656.3 546.3 L669.6 555.2 L682.9 564"/>
<path d="M640.9 603.8 L656.3 603.8 L671.8 612.7 L687.3 621.5 L705 632.6 L727.1 634.8 L753.6 630.3"/>
<path d="M693.9 595 L705 599.4 L718.2 603.8 L724.9 610.4"/>
<path d="M742.6 577.3 L749.2 583.9 L744.8 595 L751.4 603.8"/>
<path d="M749.2 553 L758 550.7 L769.1 546.3"/>
<path d="M758 564 L764.7 572.9 L760.2 583.9 L766.9 595"/>
<path d="M608.8 630.4 L620.9 639.5 L632.9 645.5 L648 654.6 L657.1 654.6"/>
<path d="M632.9 627.4 L639 639.5 L657.1 644"/>
<path d="M485.2 672.6 L488.2 690.7 L482.2 699.8"/>
<path d="M497.3 672.6 L495.8 684.7"/>
<path d="M252.9 734.6 L246.9 745.1 L242.4 751.1"/>
<path d="M405.2 671.3 L408.2 680.3"/>
<path d="M657.1 576.2 L669.1 582.2 L681.2 579.2 L693.2 570.1"/>
<path d="M651 609.3 L669.1 618.4 L690.2 624.4 L711.3 627.4"/>
<path d="M755.1 562.9 L750.7 573.9 L755.1 585 L748.5 596"/>
<path d="M761.7 551.8 L768.4 547.4"/>
<path d="M797.1 558.4 L806 561.8"/>
<path d="M822.5 529.7 L823.6 534.1"/>
</g>
<g fill="none" stroke="#8fc0ae" stroke-width=".8">
<path d="M647.9 574 L680.6 574 L680.6 611.5 L647.9 611.5 L647.9 574"/>
</g>
<g fill="none" stroke="#9c8fb5" stroke-width="1.1" stroke-linejoin="round" opacity=".9">
<path d="M680.6 568.4 L693.9 561.8 L705 557.4 L720.4 548.5 L733.7 546.3 L744.8 544.1 L775.7 544.1 L780.1 568.4 L784.6 590.5 L784.6 618.2 L744.8 619.3 L687.3 617.1 L674 610.4 L672.9 603.8 L678.4 590.5 L680.6 568.4"/>
<path d="M637.5 606 L640.9 612.7 L642 623.7 L636.4 630.3 L629.8 628.1 L627.6 617.1"/>
</g>
<path d="M428 810 L456.5 768.8 L555 743.7 L707.6 710.6 L953 595.8" fill="none" stroke="#a893b8" stroke-width="2.4" stroke-linejoin="round" opacity=".85"/>
<g fill="none" stroke="#c9a3cf" stroke-width="1" stroke-linejoin="round" opacity=".85">
<path d="M269.5 417 L275.5 429.1 L277.6 447.2 L282.6 460.2 L271.5 475.3 L269.5 487.4 L263.5 493.4 L255.4 505.4 L247.4 511.5 L233.3 513.5 L221.3 517.5 L227.3 523.5 L235.3 529.6 L247.4 537.6 L261.5 541.6 L265.5 553.7 L275.5 566.9"/>
<path d="M167 459.2 L173 465.2 L171 477.3 L175 485.3"/>
<path d="M187.1 521.5 L195.1 533.6 L191.1 545.6 L179.1 541.6 L175 553.7"/>
<path d="M415.1 477.3 L424.7 477.3 L434.4 482.1 L424.7 489.4 L429.5 499 L439.2 503.8 L448.8 501.4 L460.9 499 L473 494.2 L480.2 486.9"/>
<path d="M347.5 535.2 L359.6 530.4 L371.7 535.2 L376.5 544.8 L362 552.1 L364.4 564.1"/>
<path d="M468.1 518.3 L477.8 523.1 L487.4 515.9 L492.3 523.1"/>
<path d="M260.5 626 L269.5 638.1 L266.5 656.2 L275.5 668.2 L281.6 680.3 L278.5 698.4 L287.6 716.5 L293.6 725.5"/>
<path d="M167 626 L176 638.1 L173 656.2 L182.1 671.3"/>
<path d="M446 630.4 L458.1 639.5 L455.1 654.6 L467.1 660.6"/>
<path d="M826.4 417 L833.6 426.6 L843.2 429.1 L848.1 417"/>
<path d="M872.2 474.9 L862.5 477.3 L852.9 482.1 L855.3 489.4"/>
<path d="M934.9 417 L930.1 429.1"/>
<path d="M167 580.3 L176 589.3 L173 571.3 L179.1 556.2 L173 538.1 L176 520"/>
<path d="M260.5 634.6 L266.5 610.4 L272.5 598.4 L284.6 589.3 L281.6 574.3 L278.5 556.2 L287.6 550.1"/>
<path d="M375 592.4 L384.1 586.3 L393.1 595.4 L390.1 607.4 L402.2 619.5 L408.2 634.6 L417.2 640.6"/>
</g>
<g clip-path="url(#land)" fill="none" stroke-linejoin="round" stroke-linecap="round">
<g stroke="#f6be76" stroke-width="1.1">
<path d="M521.8 413.6 L533 414 L546.1 416.7 L559.6 416.8 L570.1 416.9"/>
<path d="M636.4 419.8 L645.2 416.7"/>
<path d="M670.2 419.1 L677.4 415.8 L687 415.1 L697.8 417.5"/>
<path d="M657 429.1 L669.3 429.6 L678.1 430.1 L690.8 431.3"/>
<path d="M690.8 431.3 L699.6 428.2"/>
<path d="M568.5 436.2 L579.6 436.7 L591.7 441.4"/>
<path d="M647.1 437.6 L653.7 436.3 L666 441.4 L677.3 440.9 L688.5 439.1"/>
<path d="M688.5 439.1 L701.2 438.4"/>
<path d="M503.2 450.3 L514 447.8 L524.6 451.5"/>
<path d="M565.9 450.9 L578.1 448.4"/>
<path d="M578.1 448.4 L588.8 446.9 L602.9 447"/>
<path d="M602.9 447 L615.2 451 L621.6 447.6"/>
<path d="M499.6 460.4 L515.9 458.8"/>
<path d="M554.5 464.1 L566.9 460.4"/>
<path d="M591.1 458.7 L598.6 461 L612.2 460.3 L620.9 460.2"/>
<path d="M533 473.5 L543.7 473.8 L556.6 473.4 L572.5 475.4 L576.9 470.2"/>
<path d="M576.9 470.2 L591.7 474"/>
<path d="M616.2 471.5 L625.8 474.1 L638.2 469.5"/>
<path d="M516.8 480.2 L522.8 484.1 L533.8 483.3 L548.4 486.1"/>
<path d="M548.4 486.1 L555.5 481.1 L566.6 480.4"/>
<path d="M566.6 480.4 L578.2 483.2 L592.2 479.4 L604.1 484.2"/>
<path d="M604.1 484.2 L610.5 480.2 L626.2 481.6"/>
<path d="M658.1 485 L666.2 486.3"/>
<path d="M666.2 486.3 L681.9 481.2 L691.8 481 L703.2 484.5"/>
<path d="M535.6 492.7 L545.5 495.6 L560.6 493.7 L568.7 496.8 L581.1 491.1"/>
<path d="M581.1 491.1 L592 495.5 L599.5 494.2 L610.1 494.6 L626.4 490.7"/>
<path d="M653.6 490.9 L667.9 494.7 L679.3 496.6"/>
<path d="M501 504.5 L516.9 504.9 L523.6 506.6 L537.7 504.8"/>
<path d="M537.7 504.8 L547.7 507.2 L560 505.7 L567.1 505.3 L579.7 501.7"/>
<path d="M648.3 507.4 L657.8 506.4 L668.8 503.1"/>
<path d="M558.1 515.2 L571 517.9 L576.4 518.8"/>
<path d="M624.8 517 L637.5 517.2 L648.2 515.3 L654.2 513.3 L667.1 513.8"/>
<path d="M667.1 513.8 L678.1 515.1 L686.7 515.9 L699.3 518.2"/>
<path d="M504.4 528.6 L514.7 530 L524.6 524.2 L536.9 526.3"/>
<path d="M578.1 526.6 L594.6 523.7 L603.2 526.4 L610.4 529.2 L621 528.5"/>
<path d="M621 528.5 L636.2 525.7 L642.9 526 L659.8 525.5 L667.3 528"/>
<path d="M501.4 426.7 L505.4 437.1 L503.2 450.3"/>
<path d="M502.1 515.9 L504.4 528.6"/>
<path d="M510.4 426.5 L516.5 435.9 L514 447.8 L515.9 458.8 L513.7 470.3"/>
<path d="M513.7 470.3 L516.8 480.2 L514.9 494.8 L516.9 504.9 L517 512.8"/>
<path d="M523.7 458.2 L522 469.6 L522.8 484.1"/>
<path d="M533 414 L535.4 430.8 L536.4 440.9"/>
<path d="M536.4 440.9 L535.1 451.9 L534.6 463.2 L533 473.5"/>
<path d="M546.1 416.7 L549.2 424.8"/>
<path d="M547.8 449 L545.8 464.3 L543.7 473.8 L548.4 486.1 L545.5 495.6"/>
<path d="M560 430.1 L561 441.3 L555.4 450"/>
<path d="M558.1 515.2 L555.6 526.3"/>
<path d="M570.1 416.9 L569.3 425.6 L568.5 436.2 L565.9 450.9 L566.9 460.4"/>
<path d="M566.9 460.4 L572.5 475.4 L566.6 480.4"/>
<path d="M567.1 505.3 L571 517.9 L571 525.5"/>
<path d="M576.9 470.2 L578.2 483.2 L581.1 491.1 L579.7 501.7 L576.4 518.8"/>
<path d="M589.1 424.8 L591.7 441.4 L588.8 446.9 L591.1 458.7"/>
<path d="M591.1 458.7 L591.7 474 L592.2 479.4 L592 495.5"/>
<path d="M592 495.5 L589.9 501.7 L589.8 512.7 L594.6 523.7"/>
<path d="M598.6 461 L601.9 471.3 L604.1 484.2"/>
<path d="M609.8 418.8 L615.8 427.4 L609.5 440.9 L615.2 451 L612.2 460.3"/>
<path d="M612.2 460.3 L616.2 471.5"/>
<path d="M612 507 L610.3 512.8 L610.4 529.2"/>
<path d="M627.1 429.7 L621.6 437.9"/>
<path d="M621.6 437.9 L621.6 447.6 L620.9 460.2"/>
<path d="M620.9 460.2 L625.8 474.1"/>
<path d="M626.4 490.7 L627 503.7 L624.8 517"/>
<path d="M636.4 419.8 L636 430.6 L635.9 439.8 L632.8 449.8"/>
<path d="M632.8 449.8 L635.5 457.7 L638.2 469.5 L634 480.5"/>
<path d="M634 480.5 L638.4 496.3 L632.8 507.8 L637.5 517.2 L636.2 525.7"/>
<path d="M648.5 430 L647.1 437.6 L644.2 449.2 L645 461"/>
<path d="M645 461 L643.7 468.4"/>
<path d="M649.5 482.7 L645.6 494.9"/>
<path d="M653.6 490.9 L657.8 506.4 L654.2 513.3 L659.8 525.5"/>
<path d="M670.9 471.7 L666.2 486.3 L667.9 494.7 L668.8 503.1"/>
<path d="M668.8 503.1 L667.1 513.8 L667.3 528"/>
<path d="M678.1 430.1 L677.3 440.9 L675.7 452.6 L682.4 460.7"/>
<path d="M682.4 460.7 L679.2 473.4"/>
<path d="M679.2 473.4 L681.9 481.2 L679.3 496.6 L680.7 504.1 L678.1 515.1"/>
<path d="M687 415.1 L690.8 431.3 L688.5 439.1 L688.6 453.4 L692.7 464.1"/>
<path d="M688.5 494.9 L689.4 504 L686.7 515.9"/>
<path d="M700 463.4 L698.5 468.5"/>
<path d="M698.4 506.2 L699.3 518.2 L704.4 523.8"/>
<path d="M501.4 426.7 L516.5 435.9"/>
<path d="M525.7 427.4 L516.5 435.9"/>
<path d="M514.9 494.8 L523.6 506.6"/>
<path d="M533 414 L525.7 427.4"/>
<path d="M578.4 415.3 L589.1 424.8"/>
<path d="M612.2 460.3 L625.8 474.1"/>
<path d="M610.1 494.6 L627 503.7"/>
<path d="M623.3 417.5 L636 430.6"/>
<path d="M648.5 430 L653.7 436.3"/>
<path d="M645.6 494.9 L657.8 506.4"/>
<path d="M677.3 440.9 L668.8 448.2"/>
<path d="M725 431.3 L736.1 429.1"/>
<path d="M761.3 427 L770.3 425.9"/>
<path d="M703.3 443.4 L713.9 438.4 L727.4 441.5"/>
<path d="M727.4 441.5 L735.5 443.3 L749.4 442 L760.5 444.9 L773.8 440.6"/>
<path d="M697.3 455.7 L711.6 456.1"/>
<path d="M711.6 456.1 L726.7 450 L739.5 451.3 L745.5 451.5 L756.3 454.6"/>
<path d="M696.6 465.9 L711.5 462.2"/>
<path d="M711.5 462.2 L726 468.8 L734.9 461.3"/>
<path d="M711.3 475 L723.5 475.1 L735.3 475.2 L748.2 479.7 L758.8 480.5"/>
<path d="M758.8 480.5 L768.7 478"/>
<path d="M708.2 489.6 L721.9 486.9 L733.4 491.7 L751.3 489.1 L763.7 485.6"/>
<path d="M763.7 485.6 L769.3 487.5"/>
<path d="M758.9 499 L772.4 504.6"/>
<path d="M703.8 523.6 L711.6 524.9 L727.8 522.2 L738.6 528.1"/>
<path d="M696.6 465.9 L699 479 L702.2 492.7 L703.4 500.1"/>
<path d="M703.4 500.1 L696.2 509.6"/>
<path d="M710.9 427.7 L713.9 438.4 L711.6 456.1 L711.5 462.2 L711.3 475"/>
<path d="M727.4 441.5 L726.7 450"/>
<path d="M726.7 450 L726 468.8 L723.5 475.1 L721.9 486.9 L723.1 500.3"/>
<path d="M737.1 416.5 L736.1 429.1 L735.5 443.3 L739.5 451.3"/>
<path d="M733.4 491.7 L736.2 498.8 L733.4 513.8"/>
<path d="M733.4 513.8 L738.6 528.1"/>
<path d="M744.1 466.5 L748.2 479.7 L751.3 489.1 L746.8 499.3"/>
<path d="M761.3 427 L760.5 444.9"/>
<path d="M760.5 444.9 L756.3 454.6"/>
<path d="M760.6 467.9 L758.8 480.5"/>
<path d="M772.6 420.2 L770.3 425.9 L773.8 440.6 L768.2 455.4"/>
<path d="M711.5 462.2 L699 479"/>
<path d="M745.5 451.5 L734.9 461.3"/>
<path d="M745.4 426.1 L760.5 444.9"/>
<path d="M685.4 498.4 L697.1 497 L707.7 500.6 L718.1 498.3"/>
<path d="M743.1 499.7 L756.8 499.2"/>
<path d="M756.8 499.2 L762 498.7 L774 499.4"/>
<path d="M655.4 510.5 L662.4 512.7 L678.4 510.9"/>
<path d="M691.7 511.8 L708.1 509.6 L714.3 511.5"/>
<path d="M671.9 519.4 L688.4 520.5 L693.8 521.5"/>
<path d="M693.8 521.5 L705.8 518.3"/>
<path d="M713.1 518.7 L722 517.4 L732.5 519.6"/>
<path d="M732.5 519.6 L743.4 522.7 L753.7 519.3 L766.5 518.5 L773.3 522.4"/>
<path d="M752.2 527.8 L764.3 532.8 L774 530.9 L782.8 532.3"/>
<path d="M782.8 532.3 L793.3 527.4"/>
<path d="M772.8 537.4 L785.5 541.5 L797 538"/>
<path d="M653.9 550.2 L663.6 550.1 L673.7 552.3"/>
<path d="M767.5 547.5 L777.8 551.6 L783.3 549.6 L797.8 551.7"/>
<path d="M665 557.9 L675.6 561.1 L682.8 560.2 L694 559.7 L703.7 560.7"/>
<path d="M712.9 563.2 L721.8 561.1 L738.1 558 L742.4 560.1 L755.4 559.1"/>
<path d="M694.2 567 L708.1 570 L713.6 570.4 L723.9 567.7 L738.1 570"/>
<path d="M654.9 529.6 L655.8 543.4 L653.9 550.2 L657.1 557.8 L653.8 573.3"/>
<path d="M667.2 500.1 L662.4 512.7"/>
<path d="M673.7 552.3 L675.6 561.1 L672.9 570"/>
<path d="M685.4 498.4 L686 510.2 L688.4 520.5"/>
<path d="M682.3 547.3 L682.8 560.2 L687.2 570.8"/>
<path d="M697.1 497 L691.7 511.8 L693.8 521.5 L694 527.8 L693.4 537.3"/>
<path d="M694 559.7 L694.2 567"/>
<path d="M707.7 500.6 L708.1 509.6 L705.8 518.3 L701.9 532.9 L707.4 538.7"/>
<path d="M707.4 538.7 L707.7 552.1 L703.7 560.7 L708.1 570"/>
<path d="M714.3 511.5 L713.1 518.7 L717.6 529.9"/>
<path d="M724.2 509.3 L722 517.4 L727.2 529 L723.3 537.9"/>
<path d="M736.4 497.2 L733.4 512.3"/>
<path d="M732.5 519.6 L737.3 532.1 L732.7 539 L736.5 549.2 L738.1 558"/>
<path d="M743.1 499.7 L742.5 511.4"/>
<path d="M743.4 522.7 L745.6 529.1 L743.3 540.7 L743 552.5 L742.4 560.1"/>
<path d="M742.4 560.1 L745.3 568.4"/>
<path d="M756.8 499.2 L756.1 510.5 L753.7 519.3 L752.2 527.8 L757.4 538.8"/>
<path d="M755.4 559.1 L755 568.6"/>
<path d="M762 498.7 L763.1 507.5 L766.5 518.5"/>
<path d="M776.1 511.4 L773.3 522.4"/>
<path d="M773.3 522.4 L774 530.9 L772.8 537.4 L777.8 551.6"/>
<path d="M777.8 551.6 L776.4 556.9 L771.9 567.7"/>
<path d="M797.8 551.7 L792.2 561.3 L794.3 571.7"/>
<path d="M665 557.9 L672.9 570"/>
<path d="M694 527.8 L707.4 538.7"/>
<path d="M693.4 537.3 L707.7 552.1"/>
<path d="M712.9 563.2 L708.1 570"/>
<path d="M756.1 547.3 L742.4 560.1"/>
<path d="M764.3 532.8 L772.8 537.4"/>
<path d="M773.3 522.4 L782.8 532.3"/>
<path d="M566.3 520.4 L573 518.9"/>
<path d="M525.8 531.5 L534.3 534.3 L548.1 532 L566.3 539"/>
<path d="M566.3 539 L573.3 535 L592.5 534.7"/>
<path d="M592.5 534.7 L601 534.4 L615.9 538.3 L625.7 539 L643.6 531.1"/>
<path d="M534.2 549.1 L553.2 544.6 L563.6 546.1 L577.5 545.3"/>
<path d="M624.9 551.5 L642 545.7"/>
<path d="M642 545.7 L653.8 548"/>
<path d="M523.7 557.9 L536.6 561 L553.6 560.4 L564.2 564.7"/>
<path d="M551.3 574.7 L560.9 569.9"/>
<path d="M601.3 578.2 L616.7 577.2 L625.6 571.2"/>
<path d="M638 578.1 L652.6 577.9"/>
<path d="M528.2 588.2 L537.7 582.9 L551.5 588.3 L563.8 588.3 L579 590.5"/>
<path d="M589.2 590.1 L600.6 587.6 L613.6 590.2 L630.5 583.6"/>
<path d="M627.7 603.5 L638.8 599.9 L653.1 597.3"/>
<path d="M523.5 615.1 L542.1 609.3 L553 611 L568.1 610.7"/>
<path d="M619.1 610.3 L630.8 616.2"/>
<path d="M539 627.9 L552.8 628.2 L566.2 622.6"/>
<path d="M581.1 626 L593.7 627.1 L605.1 628.7 L619.1 630.2"/>
<path d="M522.4 574.3 L528.2 588.2 L528.6 597.6 L523.5 615.1"/>
<path d="M523.5 615.1 L526.3 625.2"/>
<path d="M539.5 520.6 L534.3 534.3 L534.2 549.1 L536.6 561 L538.8 572"/>
<path d="M538.8 572 L537.7 582.9 L541.6 600.5 L542.1 609.3"/>
<path d="M549.6 518.6 L548.1 532"/>
<path d="M548.1 532 L553.2 544.6 L553.6 560.4 L551.3 574.7 L551.5 588.3"/>
<path d="M551.9 598.6 L553 611 L552.8 628.2"/>
<path d="M566.3 598.8 L568.1 610.7 L566.2 622.6"/>
<path d="M580.7 559.9 L574.1 571.3 L579 590.5 L574.2 596 L579.3 610.8"/>
<path d="M586.3 575.2 L589.2 590.1 L586.3 600.5 L589.2 616.5 L593.7 627.1"/>
<path d="M601.3 578.2 L600.6 587.6"/>
<path d="M600.6 587.6 L600.1 603 L606.1 611 L605.1 628.7"/>
<path d="M615.9 538.3 L613.2 549.5 L616.8 560.6"/>
<path d="M624.9 551.5 L626.1 563 L625.6 571.2"/>
<path d="M630.5 583.6 L627.7 603.5 L630.8 616.2 L633 622.1"/>
<path d="M639.8 524.5 L643.6 531.1 L642 545.7 L641.4 557.7 L638 578.1"/>
<path d="M655 531.7 L653.8 548 L658.5 559.7 L652.6 577.9"/>
<path d="M522.4 574.3 L537.7 582.9"/>
<path d="M548.1 532 L534.2 549.1"/>
<path d="M553.2 544.6 L564.2 564.7"/>
<path d="M573 518.9 L592.5 534.7"/>
<path d="M615.9 538.3 L600.7 545.5"/>
<path d="M630.8 616.2 L639.3 627.6"/>
<path d="M642 545.7 L658.5 559.7"/>
<path d="M800.5 420.1 L813.3 413.6"/>
<path d="M764 431.2 L777.8 426.8 L788.5 433.6 L805.4 430.8"/>
<path d="M805.4 430.8 L813.7 434.3"/>
<path d="M762.3 459 L772.6 463 L783.8 459.1 L805.4 455.6 L811.6 463"/>
<path d="M802 473.3 L815.9 475.6"/>
<path d="M759.9 490.3 L772.5 486.5 L784.7 487.7"/>
<path d="M798.6 486.7 L816.6 488.7"/>
<path d="M789.5 512 L802.1 513.8"/>
<path d="M757.9 532.5 L772.2 525.1 L785 533 L799.3 528.1"/>
<path d="M762.3 459 L763.9 469.3 L759.9 490.3 L760.9 501.4"/>
<path d="M783.8 459.1 L784.4 474.3 L784.7 487.7 L786.7 499.9 L789.5 512"/>
<path d="M805.4 455.6 L802 473.3 L798.6 486.7 L799 501.3 L802.1 513.8"/>
<path d="M811.6 463 L815.9 475.6 L816.6 488.7 L813.6 503.3"/>
<path d="M772.5 486.5 L786.7 499.9"/>
<path d="M187.1 637.9 L197 638.4 L213.3 636 L222.4 640.2 L233.7 643.6"/>
<path d="M198.9 665.7 L207.5 669.8 L224.7 670 L236.2 663.1 L248.4 666.9"/>
<path d="M248.4 666.9 L265.8 665.2"/>
<path d="M226.3 677.8 L240.3 675.2 L248.8 683 L263 677.6"/>
<path d="M225.6 690.1 L235.1 692.3 L253.2 695.2 L266.1 693.8"/>
<path d="M169.9 705.5 L188.7 707.6 L196.1 702.4 L214.4 703.5"/>
<path d="M173.3 720 L181.3 719.3 L201.5 718.1 L213.8 718"/>
<path d="M225 721.6 L236.3 714.4 L252.8 720.8"/>
<path d="M251.8 734.6 L261.2 728.6"/>
<path d="M222.8 742.5 L236.1 746.6"/>
<path d="M188.3 753.8 L199.1 754.8 L213.6 753.3 L226.5 756.8 L240 753.8"/>
<path d="M169.9 705.5 L173.3 720 L173.5 735.1"/>
<path d="M187.1 637.9 L184.3 653.1 L183.6 664 L183.3 677.4"/>
<path d="M184.9 732.6 L181 747.2 L188.3 753.8"/>
<path d="M202.2 728.3 L198.8 748.1 L199.1 754.8"/>
<path d="M213.3 636 L211.4 652.2 L207.5 669.8"/>
<path d="M212.2 678.9 L215 690.8 L214.4 703.5 L213.8 718 L207.2 731.3"/>
<path d="M207.2 731.3 L214.3 741.5 L213.6 753.3"/>
<path d="M224.7 670 L226.3 677.8 L225.6 690.1 L227.3 704.8"/>
<path d="M223.2 732.5 L222.8 742.5"/>
<path d="M233.7 643.6 L238 653"/>
<path d="M238 653 L236.2 663.1 L240.3 675.2 L235.1 692.3"/>
<path d="M249.6 635.9 L250.3 654.7 L248.4 666.9"/>
<path d="M248.8 683 L253.2 695.2"/>
<path d="M253.2 695.2 L246.6 705.9"/>
<path d="M246.6 705.9 L252.8 720.8 L251.8 734.6 L247.2 741.3 L251.9 759"/>
<path d="M207.5 669.8 L201.8 678.9"/>
<path d="M213.3 636 L225.5 656.4"/>
<path d="M225.6 690.1 L214.4 703.5"/>
<path d="M213.8 718 L223.2 732.5"/>
<path d="M238 653 L248.4 666.9"/>
<path d="M248.4 666.9 L240.3 675.2"/>
<path d="M508.2 474.3 L524.6 465.9"/>
<path d="M491.2 481 L504.2 488.8 L523.7 487.4"/>
<path d="M490.7 499.4 L505.3 503.5 L521.2 503.6"/>
<path d="M435.9 515.4 L456.7 515.1"/>
<path d="M443.8 538.8 L458.6 536.5 L468.6 538.5"/>
<path d="M484.6 529.4 L507.9 536.1 L515.7 529.7"/>
<path d="M473.6 549.7 L491.5 549.3 L503.3 546.2"/>
<path d="M451.6 568.3 L473.2 568.5 L486.4 561.6 L508.5 567.1"/>
<path d="M484.2 581.6 L505.1 578.7 L515.7 577.7"/>
<path d="M438.3 594.9 L460.1 601 L475 593.1"/>
<path d="M435.8 609.4 L451.5 615.2"/>
<path d="M472.4 612.4 L489.6 611.4"/>
<path d="M441.7 474.8 L441.1 481.9 L440.2 503.8 L435.9 515.4 L443.8 538.8"/>
<path d="M456.7 515.1 L458.6 536.5 L451.8 545.2"/>
<path d="M475.5 497.3 L470.8 514.6 L468.6 538.5"/>
<path d="M473.6 549.7 L473.2 568.5 L474.5 580.3 L475 593.1 L472.4 612.4"/>
<path d="M488.4 468.6 L491.2 481 L490.7 499.4 L486.4 513.8 L484.6 529.4"/>
<path d="M484.6 529.4 L491.5 549.3 L486.4 561.6 L484.2 581.6"/>
<path d="M485.1 593.5 L489.6 611.4"/>
<path d="M508.2 474.3 L504.2 488.8"/>
<path d="M503.3 546.2 L508.5 567.1 L505.1 578.7"/>
<path d="M456.7 515.1 L468.6 538.5"/>
<path d="M473.2 568.5 L484.2 581.6"/>
<path d="M300.8 546.9 L313.2 550.8 L322.1 556.3 L331.9 564"/>
<path d="M287.6 643.3 L295.5 640.7 L311.2 642.1 L319.7 636.6"/>
<path d="M875.1 441.2 L872.7 431.7 L874.5 426.8 L875.5 421.8"/>
<path d="M687.2 631.7 L679.7 627.6 L673.4 622.1 L664.5 618.7"/>
<path d="M577.1 587.5 L566.2 590.6 L561.3 598.5 L549.7 599.2"/>
<path d="M671.9 543.6 L681 543.1 L682.6 541 L692.5 537.7"/>
<path d="M335.6 518.4 L342.1 516 L354.1 512.7 L358.5 505.8"/>
<path d="M533.1 517.3 L543.1 518.2 L559.3 511.8 L571.9 510.1"/>
<path d="M274.5 644.2 L266.1 652.1 L258.5 663.5 L252 667.9"/>
<path d="M669 683.7 L678.7 690.5 L684.1 695.5 L690.1 701.8"/>
<path d="M524.2 519.6 L518.4 516.2 L511.2 516.8 L501.4 513.4"/>
<path d="M697.6 654.3 L693.8 656.6 L688.6 659.6 L683.5 665.4"/>
<path d="M363.9 597.7 L367.3 590.7 L363.4 578.6 L366.7 573.6"/>
<path d="M524.8 619.8 L528.2 615.1 L525.3 609.5 L526.5 603.7"/>
<path d="M192.7 659.5 L193.9 652.3 L196.3 652.5 L201.5 644.9"/>
<path d="M782.5 490.9 L785.3 489.6 L793.6 489.6 L799.4 493.5"/>
<path d="M442.2 507.5 L440.8 498.2 L440.1 481.3 L441.5 470.7"/>
<path d="M219.5 435.7 L228 433.5 L231.5 431.1 L237.5 432.6"/>
<path d="M642 716.9 L648.2 705.7 L648.2 692.3 L653.4 685.1"/>
<path d="M412.9 441.6 L405 444.7 L401.6 443.4 L396.5 444.5"/>
<path d="M805.4 606.7 L809 595.4 L816.5 588.8 L817.5 582.8"/>
<path d="M825.2 557.2 L825.3 546.8 L822.1 536.9 L825.2 529.7"/>
<path d="M188.3 573.8 L190.7 582.3 L191.4 598.6 L196.3 605.8"/>
<path d="M946.4 689.6 L949.9 692.5 L955.3 698.9 L957.6 701.7"/>
<path d="M717.5 661.5 L708.7 669.1 L701.4 671.4 L695.2 678.5"/>
<path d="M423.5 490.9 L426.4 496.7 L431.5 511.2 L437.4 518.3"/>
<path d="M730.3 681 L725.5 669.8 L724.4 665.4 L719.7 656.2"/>
<path d="M511.1 440 L513.8 433.7 L520.2 421.9 L520.2 413.7"/>
<path d="M720 580.5 L720.8 566.5 L726 555.9 L726.1 547.9"/>
<path d="M889.5 459.9 L898 446.8 L906.9 436.6 L913.7 429.8"/>
<path d="M682.9 675.7 L678.9 666.6 L675.9 664 L670.4 655.9"/>
<path d="M744.1 429.6 L753.2 425.3 L760.6 420.4 L770.8 412.4"/>
<path d="M640.9 541.9 L643.5 551.6 L641 561.1 L642.5 566.5"/>
<path d="M527.3 585.6 L541.2 594.1 L548.1 597.7 L559.7 606.6"/>
<path d="M314.3 663.3 L312.6 657 L316.9 649.6 L315.6 638.5"/>
<path d="M553 680.2 L538.1 679.4 L531.9 679.7 L518.1 677.4"/>
<path d="M931.5 604.6 L929.6 616.1 L924 621.9 L918.6 635.2"/>
<path d="M170.1 489.5 L162 495.9 L154 512.2 L150.8 518.4"/>
<path d="M347.8 515.3 L355.8 507.4 L365.9 496.2 L376.1 488.9"/>
<path d="M905.4 423.8 L902.1 414.2 L898 405.8 L890 393.5"/>
<path d="M672.5 435.7 L675 430.2 L682.4 426.2 L687.3 423.3"/>
<path d="M510.9 512.1 L512.8 519.9 L515 531.7 L513 544.9"/>
<path d="M419.4 652.3 L430 642.5 L438.4 634.1 L443.5 621.9"/>
<path d="M827.3 713.8 L835.4 712.5 L846.4 709.4 L852.5 704.8"/>
<path d="M451.5 439.2 L463.4 444.3 L468.8 456.8 L478.9 464.4"/>
<path d="M558.3 435.8 L563.6 427.6 L570.6 420.8 L578 411.8"/>
<path d="M861.9 593 L861 601.8 L854.3 610.2 L852.1 614.5"/>
<path d="M637.9 719.3 L641.9 712.5 L649.9 710.6 L651.1 709.1"/>
<path d="M332.6 582.8 L344.5 579.3 L351.9 573.3 L360.8 568.9"/>
<path d="M614 427.1 L620.9 435.4 L632.2 448.3 L641.2 456.4"/>
<path d="M249.2 658.2 L243.9 657.9 L242.1 649.1 L236.1 648.2"/>
<path d="M666.8 443.1 L663.6 447.1 L656.7 450.8 L646.7 454.7"/>
<path d="M756.7 423.3 L762.8 418.3 L773.3 406.3 L777.4 401.4"/>
<path d="M183.7 614.8 L188.5 607.5 L189.2 606.6 L196.6 602.5"/>
<path d="M873.1 675.3 L868.6 664.4 L865.7 652 L865.7 643.4"/>
<path d="M289.5 551.5 L296.8 553.4 L299.7 551.8 L307.6 555"/>
<path d="M660.2 436.2 L664.7 422.3 L665.6 413.4 L665.4 401.6"/>
<path d="M351 666.6 L354.4 676.3 L354 676.7 L353.2 685.8"/>
<path d="M530.6 598.3 L532.7 610 L535.7 618.1 L538.3 633.3"/>
<path d="M848 680.6 L855.1 673.5 L861.2 667 L871.2 663.1"/>
<path d="M243.4 423 L251.4 433.1 L261.5 429.1 L263.5 417"/>
<path d="M167 501.4 L175 503.4 L187.1 497.4 L205.2 501.4 L215.2 505.4"/>
<path d="M216.2 521.5 L233.3 529.6"/>
<path d="M233.3 529.6 L247.4 513.5 L263.5 517.5 L279.6 517.5 L295.6 511.5"/>
<path d="M308.9 453.2 L311.4 472.5 L306.5 489.4 L311.4 511.1"/>
<path d="M393.4 417 L398.2 436.3 L393.4 453.2"/>
<path d="M412.7 513.5 L410.2 537.6"/>
<path d="M383.7 489.4 L393.4 499 L391 513.5"/>
<path d="M463.3 518.3 L470.5 530.4 L485 535.2 L497.1 530.4 L501.9 518.3 L489.8 508.7 L473 508.7 L463.3 518.3"/>
<path d="M280 513.5 L289.6 518.3 L284.8 530.4"/>
<path d="M480.2 583.4 L485 595.5 L497.1 605.1 L520 607.5"/>
<path d="M422.3 489.4 L434.4 496.6 L448.8 499 L458.5 496.6 L470.5 486.9"/>
<path d="M448.8 468.9 L453.7 484.5 L458.5 496.6"/>
<path d="M497.1 573.8 L506.7 585.8 L511.5 600.3 L520 610"/>
<path d="M167 647.1 L182.1 653.2 L197.1 650.1 L212.2 659.2 L221.3 674.3"/>
<path d="M218.3 674.3 L221.3 695.4 L218.3 719.5 L221.3 734.6"/>
<path d="M254.4 665.2 L266.5 680.3 L269.5 695.4 L266.5 710.4 L281.6 719.5 L287.6 710.4"/>
<path d="M269.5 707.4 L266.5 722.5 L260.5 740.6"/>
<path d="M314.7 644.1 L323.8 653.2 L320.8 668.2 L311.7 678.8"/>
<path d="M287.6 689.3 L284.6 707.4 L293.6 722.5 L296.6 728.5"/>
<path d="M366 638.1 L378 647.1 L384.1 659.2"/>
<path d="M426.3 620 L432.3 638.1 L444.4 650.1 L456.4 644.1 L467 650.1"/>
<path d="M227.3 701.4 L236.3 716.5 L242.4 728.5"/>
<path d="M167 659.2 L179.1 668.2 L185.1 692.4"/>
<path d="M173 620 L179.1 638.1 L176 656.2"/>
<path d="M227.3 620 L224.3 635.1 L236.3 650.1 L245.4 674.3"/>
<path d="M197.1 719.5 L200.2 734.6 L191.1 740.6"/>
<path d="M485.2 618.4 L491.3 630.4 L500.3 639.5 L509.3 647"/>
<path d="M512.4 612.4 L518.4 636.5"/>
<path d="M572.6 604.8 L578.7 591.3 L587.7 579.2 L590.7 564.1"/>
<path d="M497.3 600.3 L494.3 618.4"/>
<path d="M539.5 546 L545.5 564.1 L548.5 582.2"/>
<path d="M476.2 609.3 L485.2 618.4"/>
<path d="M578.7 546 L572.6 561.1 L578.7 576.2 L572.6 588.2"/>
<path d="M674 524.2 L682.9 535.3 L687.3 546.3"/>
<path d="M667.4 508.7 L678.4 513.2 L689.5 515.4"/>
<path d="M678.4 535.3 L685.1 539.7 L693.9 555.2"/>
<path d="M590 519.8 L598.8 524.2 L603.3 533.1 L601.1 535.3"/>
<path d="M596.6 553 L607.7 557.4 L616.5 555.2 L623.2 548.5"/>
<path d="M682.9 506.5 L693.9 508.7 L700.5 511"/>
<path d="M689.5 515.4 L687.3 526.4 L696.1 537.5 L705 537.5"/>
<path d="M696.1 526.4 L707.2 524.2 L718.2 524.2"/>
<path d="M713.8 544.1 L716 555.2 L727.1 555.2"/>
<path d="M700.5 568.4 L696.1 577.3 L700.5 583.9 L709.4 583.9"/>
<path d="M727.1 555.2 L735.9 555.2"/>
<path d="M603.3 489.9 L605.5 502.1 L598.8 515.4"/>
<path d="M634.2 489.9 L636.4 502.1 L629.8 519.8"/>
<path d="M607.7 524.2 L618.7 522 L621 506.5"/>
<path d="M594.4 583.9 L603.3 586.1 L614.3 583.9 L623.2 575.1"/>
<path d="M609.9 599.4 L612.1 610.4 L605.5 619.3"/>
<path d="M731.5 493.3 L733.7 506.5 L744.8 506.5"/>
<path d="M720.4 506.5 L731.5 508.7 L733.7 506.5"/>
<path d="M825.9 509.8 L823.6 520.9 L830.3 529.7 L839.1 534.1 L848 531.9 L856.8 523.1 L863.4 514.2 L867.9 516.4"/>
<path d="M836.9 501 L841.3 514.2 L839.1 525.3 L843.5 534.1"/>
<path d="M856.8 489.9 L865.7 483.3 L874.5 487.7 L876.7 496.5 L867.9 501 L859 498.7 L856.8 489.9"/>
<path d="M766.2 525.3 L770.6 534.1 L779.4 540.7 L786.1 554 L783.9 562.9"/>
<path d="M779.4 540.7 L775 545.2"/>
<path d="M806 476.6 L821.4 478.8 L830.3 474.4 L843.5 478.8"/>
<path d="M761.7 481.1 L766.2 470"/>
<path d="M920.9 487.7 L932 483.3 L938.6 481.1"/>
<path d="M940.8 476.6 L943 487.7 L953 492.1"/>
<path d="M848 531.9 L850.2 540.7"/>
<path d="M855.3 417 L857.7 429.1 L865 436.3 L862.5 448.4 L867.4 461.6"/>
<path d="M836 465.2 L848.1 462.8 L857.7 460.4"/>
<path d="M898.7 426.6 L906 424.2 L913.2 431.5 L915.6 441.1"/>
<path d="M925.3 459.2 L930.1 470.1 L939.7 474.9"/>
<path d="M761.2 458 L768.5 465.2 L773.3 477.3"/>
<path d="M809.5 462.8 L809.5 472.5"/>
<path d="M790.2 433.9 L792.6 421.8 L799.8 417"/>
<path d="M727.5 426.6 L734.7 417"/>
<path d="M770.9 458 L773.3 467.7 L763.7 474.9"/>
<path d="M717.8 443.5 L720.2 455.6 L713 465.2"/>
<path d="M751.6 443.5 L761.2 445.9 L770.9 441.1 L778.1 436.3"/>
<path d="M209.2 538.1 L227.3 544.1 L245.4 538.1 L266.5 541.1 L281.6 553.2"/>
<path d="M227.3 577.3 L236.3 595.4 L245.4 607.4 L263.5 610.4 L269.5 598.4 L263.5 589.3"/>
<path d="M221.3 622.5 L239.4 619.5 L257.4 625.5"/>
<path d="M257.4 625.5 L269.5 619.5"/>
<path d="M167 550.1 L185.1 559.2 L203.2 559.2"/>
<path d="M167 619.5 L182.1 622.5"/>
<path d="M266.5 610.4 L269.5 628.5"/>
<path d="M293.6 583.3 L308.7 601.4 L317.7 607.4"/>
<path d="M350.9 619.5 L363 634.6"/>
<path d="M372 598.4 L384.1 610.4 L378 625.5"/>
<path d="M414.2 583.3 L423.3 598.4 L429.3 604.4"/>
<path d="M432.3 610.4 L438.3 628.5"/>
<path d="M236.3 556.2 L242.4 571.3 L251.4 568.2"/>
<path d="M176 526 L185.1 538.1 L182.1 553.2"/>
<path d="M396.1 577.3 L402.2 595.4 L396.1 610.4"/>
<path d="M450.4 580.3 L456.4 598.4 L450.4 616.5"/>
</g>
<g stroke="#858585" stroke-width="1.1">
<path d="M235.3 417 L227.3 433.1 L223.3 453.2 L215.2 469.3 L211.2 481.3 L193.1 486.3 L167 494.4"/>
<path d="M279.6 417 L295.6 431.1"/>
<path d="M211.2 481.3 L209.2 501.4 L210.2 521.5 L207.2 541.6"/>
<path d="M292.1 426.6 L311.4 443.5 L328.2 444.7 L352.4 441.1 L364.4 445.9 L381.3 458 L395.8 464 L415.1 464 L434.4 455.6 L453.7 445.9 L473 431.5 L487.4 424.2 L501.9 419.4 L520 424.2"/>
<path d="M381.3 473.7 L395.8 477.3 L415.1 484.5 L422.3 489.4 L415.1 496.6 L412.7 513.5 L400.6 520.7"/>
<path d="M321 509.9 L342.7 513.5 L352.4 520.7"/>
<path d="M520 585.8 L497.1 587 L477.8 590.7 L463.3 600.3"/>
<path d="M473 417 L480.2 426.6 L492.3 424.2 L506.7 426.6 L514 436.3"/>
<path d="M167 734.6 L182.1 719.5 L194.1 707.4 L209.2 696.9 L227.3 690.8 L242.4 684.8 L257.4 696.9 L269.5 701.4 L287.6 693.9 L302.7 686.3 L323.8 678.8 L347.9 677.3 L372 678.8 L384.1 668.2 L399.1 650.1 L411.2 632.1 L417.2 620"/>
<path d="M320.8 620 L302.7 638.1 L281.6 653.2 L260.5 665.2 L242.4 677.3 L227.3 690.8"/>
<path d="M194.1 653.2 L197.1 671.3 L206.2 684.8 L215.2 692.4"/>
<path d="M341.9 650.1 L353.9 671.3 L356.9 683.3 L347.9 693.9"/>
<path d="M515.4 582.2 L527.4 568.6 L536.5 561.1 L548.5 552.1 L551.5 540"/>
<path d="M557.6 567.1 L560.6 600.3 L562.1 624.4 L566.6 642.5 L578.7 653.1"/>
<path d="M590 484.4 L607.7 488.8 L625.4 491.1 L643.1 489.9 L656.3 493.3 L665.2 504.3 L667.4 519.8 L674 535.3 L682.9 546.3 L691.7 553"/>
<path d="M709.4 480 L713.8 493.3 L716 508.7 L720.4 524.2 L722.7 537.5 L720.4 553 L713.8 568.4 L720.4 579.5 L727.1 586.1"/>
<path d="M727.1 486.6 L713.8 495.5 L700.5 506.5 L693.9 519.8 L700.5 533.1 L709.4 539.7 L720.4 537.5"/>
<path d="M720.4 537.5 L731.5 528.6 L744.8 519.8"/>
<path d="M623.2 553 L627.6 564 L627.6 577.3 L625.4 590.5 L627.6 606 L629.8 621.5"/>
<path d="M590 537.5 L603.3 544.1 L618.7 553 L623.2 553"/>
<path d="M733 520.9 L746.3 514.2 L761.7 505.4 L777.2 498.7 L792.7 494.3 L808.2 492.1 L825.9 493.2 L843.5 496.5 L861.2 499.8 L876.7 501 L892.2 498.7 L905.5 496.5 L909.9 498.7 L916.5 503.2 L932 501 L945.2 496.5 L953 492.1"/>
<path d="M777.2 483.3 L781.6 494.3 L786.1 507.6 L792.7 514.2"/>
<path d="M778.1 417 L770.9 429.1 L766.1 443.5 L758.8 458 L746.8 465.2 L732.3 472.5"/>
<path d="M770.9 441.1 L773.3 460.4 L778.1 477.3"/>
<path d="M206.2 580.3 L197.1 604.4 L191.1 628.5"/>
<path d="M314.7 631.5 L326.8 619.5 L347.9 595.4 L363 574.3 L372 556.2 L384.1 538.1 L393.1 526"/>
<path d="M353.9 520 L355.4 538.1 L363 559.2"/>
<path d="M326.8 619.5 L338.8 640.6"/>
<path d="M411.2 628.5 L423.3 616.5 L438.3 607.4 L467 598.4"/>
<path d="M500 426.6 L512.1 433.9 L524.1 448.4 L548.2 453.2 L562.7 450.8 L572.4 441.1 L574.8 426.6 L572.4 417"/>
<path d="M572.4 441.1 L577.2 458 L582 472.5 L591.7 486.9 L613.4 489.4 L635.1 489.4 L654.4 491.8 L668.8 499 L683.3 503.8 L697.8 499"/>
<path d="M635.1 441.1 L639.9 465.2 L637.5 486.9 L644.7 496.6 L649.5 508.7 L654.4 520"/>
<path d="M601.3 445.9 L620.6 443.5 L635.1 441.1 L654.4 433.9 L668.8 436.3 L683.3 445.9 L697.8 462.8 L707.4 474.9 L717.1 496.6 L719.5 520"/>
<path d="M707.4 474.9 L721.9 473.7 L740 472.5"/>
<path d="M524.1 448.4 L521.7 465.2 L524.1 484.5 L531.4 499 L528.9 520"/>
<path d="M654.4 417 L659.2 426.6 L654.4 433.9"/>
</g>
<g stroke="#f3957c" stroke-width="1.2">
<path d="M636 430.6 L648.5 430"/>
<path d="M547.8 449 L555.4 450 L565.9 450.9"/>
<path d="M534.6 463.2 L545.8 464.3 L554.5 464.1"/>
<path d="M682.4 460.7 L692.7 464.1 L700 463.4"/>
<path d="M591.7 474 L601.9 471.3"/>
<path d="M643.7 468.4 L658.8 474.8 L670.9 471.7 L679.2 473.4"/>
<path d="M525.2 493.8 L535.6 492.7"/>
<path d="M679.3 496.6 L688.5 494.9 L700.6 490.9"/>
<path d="M680.7 504.1 L689.4 504 L698.4 506.2"/>
<path d="M502.1 515.9 L517 512.8 L527.4 519.5"/>
<path d="M589.8 512.7 L600.4 519.5 L610.3 512.8"/>
<path d="M536.9 526.3 L549.3 524.2 L555.6 526.3 L571 525.5 L578.1 526.6"/>
<path d="M524.6 451.5 L523.7 458.2"/>
<path d="M544.8 435.9 L547.8 449"/>
<path d="M603.7 420 L604.3 430.3"/>
<path d="M604.3 430.3 L601.3 438.1 L602.9 447 L598.6 461"/>
<path d="M604.1 484.2 L599.5 494.2 L603.1 504.3 L600.4 519.5 L603.2 526.4"/>
<path d="M645.6 494.9 L648.3 507.4 L648.2 515.3"/>
<path d="M657 429.1 L653.7 436.3 L660 448.7 L658.6 458"/>
<path d="M658.8 474.8 L658.1 485 L653.6 490.9"/>
<path d="M678.1 515.1 L676.5 525.8"/>
<path d="M701.2 438.4 L699.6 447.4 L700 463.4"/>
<path d="M698.5 468.5 L703.2 484.5"/>
<path d="M572.5 475.4 L555.5 481.1"/>
<path d="M654.2 513.3 L642.9 526"/>
<path d="M669.3 429.6 L677.3 440.9"/>
<path d="M737.1 416.5 L749.8 419.1 L762.1 414.1 L772.6 420.2"/>
<path d="M702.5 420.3 L703.1 428.7"/>
<path d="M746.8 499.3 L749.1 516.6 L744.7 524.3"/>
<path d="M762.6 516.3 L762.2 527.9"/>
<path d="M667.2 500.1 L675.7 499"/>
<path d="M678.4 510.9 L686 510.2"/>
<path d="M773.3 522.4 L783.7 520.9 L795.7 516.9"/>
<path d="M654.9 529.6 L668.3 532.6"/>
<path d="M694 527.8 L701.9 532.9 L717.6 529.9 L727.2 529"/>
<path d="M673.7 552.3 L682.3 547.3 L697.7 550.6"/>
<path d="M743 552.5 L756.1 547.3 L767.5 547.5"/>
<path d="M657.1 557.8 L665 557.9"/>
<path d="M738.1 570 L745.3 568.4 L755 568.6 L766.2 571.1"/>
<path d="M678.4 510.9 L671.9 519.4 L677 528.7 L676.3 536.6 L673.7 552.3"/>
<path d="M693.4 537.3 L697.7 550.6 L694 559.7"/>
<path d="M717.6 529.9 L717 538.3"/>
<path d="M712.8 549 L712.9 563.2"/>
<path d="M723.3 537.9 L723.5 548.2 L721.8 561.1 L723.9 567.7"/>
<path d="M767.5 547.5 L763.5 556.8 L766.2 571.1"/>
<path d="M782.9 498.7 L784.2 506.9 L783.7 520.9 L782.8 532.3"/>
<path d="M796.9 498.5 L791.9 512.4 L795.7 516.9 L793.3 527.4 L797 538"/>
<path d="M797 538 L797.8 551.7"/>
<path d="M705.8 518.3 L694 527.8"/>
<path d="M732.7 539 L743 552.5"/>
<path d="M777.8 551.6 L786.3 559"/>
<path d="M528.6 597.6 L541.6 600.5 L551.9 598.6"/>
<path d="M527 525.9 L525.8 531.5 L527.6 551.2"/>
<path d="M563.6 546.1 L564.2 564.7 L560.9 569.9 L563.8 588.3"/>
<path d="M563.8 588.3 L566.3 598.8"/>
<path d="M616.7 577.2 L613.6 590.2 L614.8 602.4 L619.1 610.3 L619.1 630.2"/>
<path d="M193.9 695.7 L215 690.8"/>
<path d="M246.6 705.9 L260 707"/>
<path d="M202.2 728.3 L207.2 731.3 L223.2 732.5"/>
<path d="M247.2 741.3 L264.5 747.6"/>
<path d="M265.9 655.4 L265.8 665.2 L263 677.6"/>
<path d="M263 677.6 L266.1 693.8"/>
<path d="M460.8 506.2 L475.5 497.3 L490.7 499.4"/>
<path d="M508.5 567.1 L522.3 566.4"/>
<path d="M508.5 595.8 L502.9 612.4"/>
<path d="M457.8 472.7 L468.3 488.9"/>
</g>
<g stroke="#e7708a" stroke-width="1.3">
<path d="M570.1 416.9 L578.4 415.3 L590.1 419.7 L603.7 420 L609.8 418.8"/>
<path d="M623.3 417.5 L636.4 419.8"/>
<path d="M645.2 416.7 L656 419.2 L670.2 419.1"/>
<path d="M501.4 426.7 L510.4 426.5 L525.7 427.4 L535.4 430.8"/>
<path d="M569.3 425.6 L578.2 426.3"/>
<path d="M578.2 426.3 L589.1 424.8 L604.3 430.3 L615.8 427.4 L627.1 429.7"/>
<path d="M526.5 436.7 L536.4 440.9 L544.8 435.9"/>
<path d="M544.8 435.9 L561 441.3 L568.5 436.2"/>
<path d="M601.3 438.1 L609.5 440.9 L621.6 437.9 L635.9 439.8 L647.1 437.6"/>
<path d="M524.6 451.5 L535.1 451.9 L547.8 449"/>
<path d="M660 448.7 L668.8 448.2 L675.7 452.6 L688.6 453.4"/>
<path d="M620.9 460.2 L635.5 457.7 L645 461"/>
<path d="M645 461 L658.6 458 L666.7 461.8 L682.4 460.7"/>
<path d="M679.2 473.4 L692.8 473.7 L698.5 468.5"/>
<path d="M626.2 481.6 L634 480.5 L649.5 482.7"/>
<path d="M645.6 494.9 L653.6 490.9"/>
<path d="M589.9 501.7 L603.1 504.3 L612 507 L627 503.7"/>
<path d="M550.2 512.9 L558.1 515.2"/>
<path d="M499.6 460.4 L504.1 468.8 L500.8 485.8 L504.1 491"/>
<path d="M526.5 436.7 L524.6 451.5"/>
<path d="M525.2 493.8 L523.6 506.6 L527.4 519.5 L524.6 524.2"/>
<path d="M533 473.5 L533.8 483.3 L535.6 492.7 L537.7 504.8 L536.9 514.2"/>
<path d="M549.2 424.8 L544.8 435.9"/>
<path d="M547.7 507.2 L550.2 512.9"/>
<path d="M554.5 464.1 L556.6 473.4 L555.5 481.1"/>
<path d="M566.6 480.4 L568.7 496.8 L567.1 505.3"/>
<path d="M578.2 426.3 L579.6 436.7 L578.1 448.4 L582.9 458.8"/>
<path d="M669.3 429.6 L666 441.4 L668.8 448.2 L666.7 461.8 L670.9 471.7"/>
<path d="M697.8 417.5 L699.6 428.2"/>
<path d="M524.6 451.5 L534.6 463.2"/>
<path d="M536.9 514.2 L549.3 524.2"/>
<path d="M638.4 496.3 L627 503.7"/>
<path d="M632.8 507.8 L648.2 515.3"/>
<path d="M653.7 436.3 L668.8 448.2"/>
<path d="M690.8 431.3 L677.3 440.9"/>
<path d="M680.7 504.1 L686.7 515.9"/>
<path d="M703.4 500.1 L710.4 503.4 L723.1 500.3 L736.2 498.8 L746.8 499.3"/>
<path d="M749.8 419.1 L745.4 426.1 L749.4 442 L745.5 451.5"/>
<path d="M774 499.4 L782.9 498.7 L796.9 498.5"/>
<path d="M686 510.2 L691.7 511.8"/>
<path d="M714.3 511.5 L724.2 509.3 L733.4 512.3 L742.5 511.4 L756.1 510.5"/>
<path d="M756.1 510.5 L763.1 507.5 L776.1 511.4 L784.2 506.9 L791.9 512.4"/>
<path d="M668.3 532.6 L677 528.7 L684.4 527.4"/>
<path d="M684.4 527.4 L694 527.8"/>
<path d="M727.2 529 L737.3 532.1"/>
<path d="M664.5 537.7 L676.3 536.6 L682.7 541.8 L693.4 537.3"/>
<path d="M743.3 540.7 L757.4 538.8 L766.9 542.6"/>
<path d="M707.7 552.1 L712.8 549 L723.5 548.2 L736.5 549.2"/>
<path d="M786.3 559 L792.2 561.3"/>
<path d="M653.8 573.3 L662.8 570.9 L672.9 570 L687.2 570.8 L694.2 567"/>
<path d="M654.1 499.3 L655.4 510.5 L657.6 523.2 L654.9 529.6"/>
<path d="M668.3 532.6 L664.5 537.7 L663.6 550.1 L665 557.9"/>
<path d="M757.4 538.8 L756.1 547.3"/>
<path d="M756.1 547.3 L755.4 559.1"/>
<path d="M782.8 532.3 L785.5 541.5"/>
<path d="M783.3 549.6 L786.3 559 L781.6 572.3"/>
<path d="M666.3 522.2 L677 528.7"/>
<path d="M686 510.2 L693.8 521.5"/>
<path d="M682.7 541.8 L697.7 550.6"/>
<path d="M752.2 527.8 L766.9 542.6"/>
<path d="M527 525.9 L539.5 520.6 L549.6 518.6 L566.3 520.4"/>
<path d="M616.8 560.6 L626.1 563 L641.4 557.7 L658.5 559.7"/>
<path d="M566.3 598.8 L574.2 596"/>
<path d="M574.2 596 L586.3 600.5 L600.1 603 L614.8 602.4 L627.7 603.5"/>
<path d="M568.1 610.7 L579.3 610.8 L589.2 616.5 L606.1 611 L619.1 610.3"/>
<path d="M633 622.1 L639.3 627.6 L651.2 626.1"/>
<path d="M591.1 520.7 L592.5 534.7 L588.5 551.4 L586.7 563 L586.3 575.2"/>
<path d="M640.5 590.2 L638.8 599.9 L638.9 612.4 L639.3 627.6"/>
<path d="M652.6 577.9 L658.2 588.9 L653.1 597.3 L653 609.4 L651.2 626.1"/>
<path d="M592.5 534.7 L577.5 545.3"/>
<path d="M627.3 518 L615.9 538.3"/>
<path d="M777.1 414.5 L788.5 413.4"/>
<path d="M763.9 469.3 L775.4 469 L784.4 474.3"/>
<path d="M771.7 503.2 L771.1 517.6"/>
<path d="M249.6 635.9 L259.8 639.2"/>
<path d="M170.5 643.2 L174.4 653.9 L175 669.9"/>
<path d="M175 669.9 L171.1 674.9 L175 688.7"/>
<path d="M222.8 742.5 L226.5 756.8"/>
<path d="M236.1 732.8 L236.1 746.6 L240 753.8"/>
<path d="M456.7 515.1 L470.8 514.6"/>
<path d="M451.8 545.2 L473.6 549.7"/>
<path d="M508.5 595.8 L520.6 600.2"/>
<path d="M502.9 612.4 L521.5 614.1"/>
<path d="M438.1 564 L439.9 582.8 L438.3 594.9"/>
<path d="M451.8 545.2 L451.6 568.3 L457.7 578.4 L460.1 601 L451.5 615.2"/>
<path d="M468.6 538.5 L473.6 549.7"/>
<path d="M522.3 566.4 L515.7 577.7 L520.6 600.2"/>
<path d="M167 492.4 L179.1 487.4 L199.2 484.3 L217.3 485.3 L233.3 486.3 L257.5 485.3 L267.5 492.4 L281.6 499.4 L297.7 503.4"/>
<path d="M243.4 417 L241.4 429.1 L227.3 445.1 L219.3 463.2 L217.3 477.3 L216.2 489.4 L213.2 505.4 L212.2 521.5 L209.2 537.6"/>
<path d="M271.5 417 L287.6 419"/>
<path d="M280 499 L294.5 501.4 L311.4 511.1 L323.4 509.9 L342.7 508.7 L359.6 507.4 L376.5 505 L386.1 509.9 L400.6 514.7 L415.1 513.5 L434.4 514.7 L448.8 513.5 L463.3 506.2 L480.2 496.6 L497.1 486.9 L520 479.7"/>
<path d="M323.4 509.9 L328.2 523.1"/>
<path d="M393.4 525.5 L400.6 514.7"/>
<path d="M280 436.3 L294.5 431.5 L304.1 441.1 L318.6 455.6 L333.1 467.7 L347.5 473.7 L362 468.9 L376.5 464 L386.1 473.7 L405.4 480.9 L422.3 482.1 L434.4 477.3 L448.8 468.9 L468.1 460.4 L485 455.6 L501.9 450.8 L520 445.9"/>
<path d="M376.5 464 L388.5 455.6 L405.4 448.4 L415.1 436.3 L424.7 426.6 L434.4 417"/>
<path d="M415.1 436.3 L413.9 458 L410.2 480.9 L411.5 496.6 L412.7 513.5"/>
<path d="M463.3 585.8 L480.2 583.4 L497.1 573.8 L520 571.4"/>
<path d="M444 518.3 L446.4 537.6"/>
<path d="M444 518.3 L458.5 530.4"/>
<path d="M458.5 530.4 L473 537.6 L489.8 542.4 L501.9 552.1 L511.5 561.7 L520 566.5"/>
<path d="M480.2 417 L485 436.3 L487.4 455.6 L489.8 474.9 L494.7 486.9 L492.3 503.8 L497.1 523.1 L501.9 552.1"/>
<path d="M306.5 523.1 L323.4 509.9"/>
<path d="M167 693.9 L185.1 692.4 L206.2 690.8 L227.3 684.8 L245.4 674.3 L260.5 662.2 L278.5 651.7 L296.6 641.1 L311.7 632.1 L323.8 620"/>
<path d="M167 712 L185.1 707.4 L206.2 705.9 L227.3 701.4 L245.4 702.9 L269.5 704.4 L284.6 696.9 L299.6 687.8 L311.7 678.8 L329.8 669.7 L347.9 663.7 L366 662.2 L384.1 659.2 L399.1 648.6 L411.2 635.1 L420.2 620"/>
<path d="M167 677.3 L191.1 675.8 L218.3 674.3 L239.4 671.3 L248.4 678.8 L254.4 695.4 L269.5 707.4"/>
<path d="M203.2 620 L203.2 644.1 L206.2 668.2 L209.2 690.8 L215.2 710.4 L212.2 722.5"/>
<path d="M188.1 620 L189.6 650.1 L194.1 668.2 L206.2 690.8"/>
<path d="M335.8 620 L341.9 638.1 L347.9 653.2 L350.9 663.7 L355.4 680.3 L358.4 698.4 L356.9 707.4"/>
<path d="M384.1 659.2 L405.2 672.8 L408.2 684.8 L417.2 693.9 L432.3 692.4 L442.9 683.3 L442.9 669.7 L432.3 662.2 L456.4 660.7 L467 665.2"/>
<path d="M167 719.5 L179.1 713.5 L194.1 710.4"/>
<path d="M500.3 582.2 L518.4 576.2 L533.5 567.1 L548.5 555.1 L560.6 549 L572.6 540"/>
<path d="M515.4 579.2 L530.4 568.6"/>
<path d="M464.1 672.6 L479.2 666.6 L494.3 657.6 L509.3 647 L518.4 636.5 L530.4 624.4 L542.5 612.4 L554.6 603.3 L572.6 604.8 L590.7 600.3"/>
<path d="M560.6 549 L566.6 567.1 L560.6 585.2 L554.6 603.3"/>
<path d="M572.6 604.8 L581.7 618.4 L593.8 627.4"/>
<path d="M602.8 630.4 L596.8 642.5 L589.2 639.5 L590.7 627.4"/>
<path d="M518.4 636.5 L519.9 651.5 L524.4 663.6 L530.4 666.6"/>
<path d="M581.7 540 L590.7 555.1"/>
<path d="M590 488.8 L603.3 489.9 L618.7 491.1 L634.2 489.9 L647.5 491.1 L663 495.5 L678.4 493.3 L693.9 497.7 L709.4 493.3 L722.7 491.1 L740.3 493.3"/>
<path d="M618.7 491.1 L621 506.5 L629.8 519.8 L640.9 528.6 L647.5 535.3"/>
<path d="M663 495.5 L667.4 508.7 L669.6 522 L678.4 535.3 L687.3 546.3 L693.9 555.2 L705 564 L713.8 570.6 L720.4 577.3 L727.1 583.9"/>
<path d="M678.4 493.3 L682.9 506.5 L689.5 515.4 L696.1 526.4 L705 537.5 L713.8 544.1 L722.7 541.9 L731.5 535.3 L744.8 526.4"/>
<path d="M693.9 497.7 L700.5 511 L707.2 524.2 L713.8 533.1 L722.7 541.9"/>
<path d="M722.7 491.1 L720.4 506.5 L718.2 524.2 L722.7 541.9 L727.1 555.2 L735.9 568.4"/>
<path d="M590 508.7 L598.8 515.4 L607.7 524.2 L616.5 535.3 L623.2 548.5 L625.4 561.8 L623.2 575.1 L627.6 590.5 L629.8 603.8"/>
<path d="M590 530.9 L601.1 535.3 L612.1 544.1 L623.2 548.5"/>
<path d="M590 575.1 L603.3 568.4 L614.3 564 L625.4 561.8"/>
<path d="M590 603.8 L601.1 599.4 L614.3 597.2 L627.6 590.5 L640.9 593.9 L656.3 593.9 L674 593.9 L680.6 595 L689.5 591.7 L700.5 588.3 L709.4 583.9"/>
<path d="M590 621.5 L596.6 612.7 L603.3 606 L614.3 597.2"/>
<path d="M687.3 546.3 L696.1 550.7 L705 546.3 L713.8 544.1"/>
<path d="M731.5 535.3 L735.9 546.3"/>
<path d="M693.9 555.2 L700.5 568.4 L709.4 575.1 L720.4 577.3"/>
<path d="M640.9 528.6 L634.2 537.5 L625.4 546.3"/>
<path d="M647.5 491.1 L651.9 504.3 L647.5 517.6 L640.9 528.6"/>
<path d="M709.4 493.3 L711.6 506.5 L707.2 524.2"/>
<path d="M733 525.3 L746.3 520.9 L759.5 514.2 L772.8 512 L786.1 510.9 L799.3 507.6 L812.6 501 L823.6 498.7 L830.3 494.3 L843.5 492.1 L852.4 498.7 L865.7 503.2 L876.7 501 L887.8 498.7 L898.8 496.5 L909.9 498.7 L918.7 494.3 L932 492.1 L945.2 489.9 L953 487.7"/>
<path d="M733 478.8 L746.3 483.3 L761.7 481.1 L777.2 483.3 L790.5 478.8 L806 476.6 L808.2 485.5 L814.8 492.1 L823.6 498.7"/>
<path d="M777.2 483.3 L779.4 496.5 L783.9 507.6 L790.5 514.2 L793.8 520.9"/>
<path d="M823.6 498.7 L825.9 509.8"/>
<path d="M830.3 494.3 L836.9 501 L843.5 505.4 L853.5 503.2 L865.7 503.2"/>
<path d="M876.7 470 L887.8 476.6 L896.6 483.3 L901 492.1 L898.8 496.5"/>
<path d="M916.5 476.6 L920.9 487.7 L918.7 494.3"/>
<path d="M932 492.1 L938.6 481.1 L945.2 474.4 L953 470"/>
<path d="M733 536.3 L741.8 534.1 L755.1 527.5 L766.2 525.3 L775 520.9 L786.1 510.9"/>
<path d="M741.8 543 L750.7 536.3 L755.1 527.5"/>
<path d="M713 438.7 L727.5 439.9 L744.4 433.9 L761.2 431.5 L778.1 436.3 L790.2 433.9 L796.2 443.5 L799.8 458 L809.5 462.8 L821.5 459.2 L836 465.2 L852.9 464 L867.4 461.6 L879.4 470.1 L889.1 476.1"/>
<path d="M889.1 476.1 L901.1 468.9 L913.2 464 L925.3 459.2 L934.9 455.6 L944.5 445.9 L953 438.7"/>
<path d="M819.1 417 L809.5 431.5 L802.2 445.9 L799.8 458"/>
<path d="M713 460.4 L727.5 462.8 L741.9 458 L756.4 455.6 L770.9 458 L785.4 450.8 L796.2 443.5"/>
<path d="M799.8 458 L804.7 472.5"/>
<path d="M778.1 436.3 L780.5 450.8 L782.9 465.2 L778.1 472.5"/>
<path d="M939.7 455.6 L942.1 470.1 L939.7 489.4"/>
<path d="M920.4 417 L918 429.1 L913.2 441.1 L913.2 464"/>
<path d="M744.4 433.9 L749.2 448.4 L754 462.8 L749.2 474.9"/>
<path d="M713 421.8 L727.5 426.6 L744.4 433.9"/>
<path d="M761.2 431.5 L763.7 417"/>
<path d="M727.5 439.9 L729.9 453.2 L727.5 462.8 L725.1 474.9"/>
<path d="M206.2 520 L209.2 538.1 L206.2 559.2 L203.2 580.3 L200.2 604.4 L203.2 628.5"/>
<path d="M167 595.4 L185.1 592.4 L203.2 589.3 L227.3 577.3 L251.4 568.2 L272.5 556.2 L293.6 547.1 L311.7 535.1 L323.8 526 L329.8 520"/>
<path d="M305.7 622.5 L323.8 607.4 L341.9 592.4 L359.9 574.3 L378 553.2 L390.1 538.1 L396.1 520"/>
<path d="M311.7 535.1 L329.8 538.1 L347.9 529 L353.9 520"/>
<path d="M359.9 574.3 L378 580.3 L396.1 577.3 L414.2 580.3 L432.3 583.3 L450.4 580.3 L467 577.3"/>
<path d="M335.8 613.5 L341.9 631.5"/>
<path d="M405.2 637.6 L417.2 619.5 L429.3 604.4 L444.4 595.4 L467 586.3"/>
<path d="M498.2 455.9 L513.6 453.9 L532.3 452.6 L544.8 453.2 L565.8 451.3 L590.3 450.6 L608.5 448.2 L626.4 441.1 L645.6 448.5 L664.2 442.8 L684.5 435.6 L704.4 441.7 L720.5 433 L742.6 438.5"/>
<path d="M501.5 480 L518.4 477.8 L535.5 479.4 L555.1 477.9 L575.1 474.5 L584.3 480.1 L609.4 484.1 L626.3 480.7 L644.8 486.1 L663 490 L683.9 489.7 L703.9 492.4 L724.4 487.9 L741.2 484.5"/>
<path d="M550.7 420.3 L553.5 434.4 L549.7 448.8 L548.1 465.7 L546.7 481.4 L548.3 504.8 L545.3 522.1"/>
<path d="M581.4 414.6 L583 433.4 L589.4 447.6 L585.2 462 L588.3 480.9 L594.4 502.4 L594.1 523.5"/>
<path d="M614.5 414 L614.1 428.2 L604 447.8 L614.2 462.8 L622.2 484.7 L633.8 502.2 L642.7 519.1"/>
<path d="M649.2 417.1 L648.1 432.2 L645.1 446.7 L652.6 465.2 L644.2 488.4 L647.7 502.4 L657.7 520.1"/>
<path d="M683.6 413.6 L680.3 427.2 L679.9 439.5 L689 452.5 L684.2 469.9 L684.6 485.9 L689.5 505.5 L680 516.9"/>
<path d="M718.3 420.2 L717.8 426.3 L722.5 435 L716.1 451.9 L721 470.8 L720.5 483.6 L728.6 498.1 L732 521.6"/>
<path d="M498.7 497.1 L516.6 494.8 L529.2 498.5 L547.2 498.6 L561.5 497.8 L581.9 501 L594.2 496.7"/>
<path d="M648.4 504.9 L671.5 505.9 L686.2 501.1 L707.6 506.5 L728.8 503.8 L737.8 502.3"/>
<path d="M502.2 432.5 L519 428 L531.2 425.1 L552.8 432.3 L568.8 430.9 L583.8 430.9 L604.2 426.7 L609.9 434.6"/>
</g>
</g>
<path d="M627.6 590.5 L640.9 593.9 L656.3 593.9 L674 593.9 L680.6 595 L689.5 591.7" fill="none" stroke="#e7708a" stroke-width="1"/>
<path d="M647.5 535.3 L656.3 539.7 L667.4 541.9 L678.4 544.1" fill="none" stroke="#e7708a" stroke-width="1"/>
<g text-anchor="middle" stroke="#fff" stroke-opacity=".85" stroke-width="1.4" paint-order="stroke" stroke-linejoin="round">
<g font-size="11.200" fill="#1c1c1c">
<text x="451" y="464.1">肇庆市</text>
<text x="383" y="487.6">云浮市</text>
<text x="581" y="450.1">广州市</text>
<text x="660.5" y="469.6">东莞市</text>
<text x="769" y="452.6">惠州市</text>
<text x="550.6" y="547.3000000000001">江门市</text>
<text x="602" y="557.6">中山市</text>
<text x="711" y="553.6">深圳市</text>
<text x="632" y="600.6">珠海市</text>
<text x="926" y="510.6">汕尾市</text>
<text x="373" y="673.6">阳江市</text>
<text x="201.5" y="708.1">茂名市</text>
<text x="729" y="593">香港 Hong</text><text x="729" y="608">Kong</text>
</g>
<g font-size="9" fill="#303030">
<text x="301" y="428.3">郁南县</text>
<text x="340.3" y="446.0">德庆县</text>
<text x="375.8" y="459.40000000000003">云安区</text>
<text x="467" y="443.3">鼎湖区</text>
<text x="520.5" y="444.3">三水区</text>
<text x="561.5" y="466.6">南海区</text>
<text x="520.5" y="489.5">高明区</text>
<text x="532.6" y="512.0">鹤山市</text>
<text x="212.6" y="486.2">岑溪市</text>
<text x="305" y="512.8">罗定市</text>
<text x="412" y="525.3">新兴县</text>
<text x="204" y="585.8">信宜市</text>
<text x="490" y="582.3">开平市</text>
<text x="544" y="566.8">新会区</text>
<text x="504" y="603.8">台山市</text>
<text x="343" y="617.8">阳春市</text>
<text x="427" y="615.3">恩平市</text>
<text x="587" y="610.8">斗门区</text>
<text x="600.8" y="483.0">番禺区</text>
<text x="585.6" y="505.90000000000003">顺德区</text>
<text x="623.5" y="505.90000000000003">南沙区</text>
<text x="690.5" y="516.0999999999999">光明区</text>
<text x="759" y="522.8">坪山区</text>
<text x="670" y="425.1">增城区</text>
<text x="819.4" y="474.6">惠东县</text>
<text x="918" y="477.5">海丰县</text>
<text x="190" y="662.3">高州市</text>
<text x="313" y="691.3">阳西县</text>
<text x="215" y="733.8">电白区</text>
<text x="178" y="746.8">吴川市</text>
</g>
<g font-size="9" fill="#9d6c9f" stroke-opacity=".5">
<text x="344" y="498.8">云浮市</text>
<text x="625.4" y="427.1">广州市</text>
<text x="468.6" y="620.8">江门市</text>
<text x="336.1" y="638.4">阳江市</text>
<text x="185.7" y="645.5999999999999">茂名市</text>
<text x="657" y="635.8">珠海市</text>
</g>
<text x="897" y="527" font-size="9" fill="#6f94c8" stroke-opacity=".3">红海湾</text>
</g>
</svg>
<div class="abs lc" style="left:9px;top:37px;width:28px;height:57px"></div>
<div class="abs" style="left:10px;top:65px;width:26px;height:1px;background:#ccc"></div>
<div class="abs lt" style="left:10.500px;top:40px;width:26px">+</div>
<div class="abs lt" style="left:10.500px;top:68.500px;width:26px">&#8722;</div>
<div class="abs lc" style="left:9px;top:103.5px;width:28px;height:28.5px"></div>
<svg class="abs" style="left:15.500px;top:111px" width="15" height="13" viewBox="0 0 15 13"><path d="M7.500 0L0 6.300H2.300V13H6V8.500H9V13H12.700V6.300H15Z" fill="#6a8799"/></svg>
<div class="abs lc" style="left:748px;top:37.5px;width:29px;height:29px"></div>
<svg class="abs" style="left:756.500px;top:46px" width="12" height="12" viewBox="0 0 14 14"><path d="M1 1.200H13L8.500 6.800V12.500L5.500 10.800V6.800Z" fill="none" stroke="#000" stroke-width="1.600" stroke-linejoin="round"/></svg>
<div class="abs" style="left:592.500px;top:407.500px;width:194.500px;height:14.500px;background:rgba(255,255,255,.7);font-size:9.500px;line-height:14px;color:#333;text-align:right;padding-right:4.300px;white-space:nowrap;letter-spacing:.5px"><span style="color:#0078a8">Leaflet</span> | &copy; <span style="color:#0078a8">OpenStreetMap</span> contributors</div>
<!--MAP-END-->
</div>

<!-- ============ WIDGET: CPU graph partial ============ -->
<div class="w" style="left:961px;top:387px;width:60px;height:431px" id="wcpu">
  <div class="wh" style="top:7px;font-weight:normal;font-size:13px">CPU</div>
  <div class="abs" style="left:-8px;top:31px;width:30px;text-align:right;font-size:11px;line-height:12px;color:#f2f2f2">140</div>
  <div class="abs" style="left:-8px;top:66.8px;width:30px;text-align:right;font-size:11px;line-height:12px;color:#f2f2f2">120</div>
  <div class="abs" style="left:-8px;top:102.4px;width:30px;text-align:right;font-size:11px;line-height:12px;color:#f2f2f2">100</div>
  <div class="abs" style="left:-8px;top:138.4px;width:30px;text-align:right;font-size:11px;line-height:12px;color:#f2f2f2">80</div>
  <div class="abs" style="left:-8px;top:173.5px;width:30px;text-align:right;font-size:11px;line-height:12px;color:#f2f2f2">60</div>
  <div class="abs" style="left:-8px;top:209px;width:30px;text-align:right;font-size:11px;line-height:12px;color:#f2f2f2">40</div>
  <div class="abs" style="left:-8px;top:244.7px;width:30px;text-align:right;font-size:11px;line-height:12px;color:#f2f2f2">20</div>
  <div class="abs" style="left:-8px;top:280.3px;width:30px;text-align:right;font-size:11px;line-height:12px;color:#f2f2f2">0</div>
  <div class="abs" style="left:-8px;top:316px;width:30px;text-align:right;font-size:11px;line-height:12px;color:#f2f2f2">-20</div>
  <svg class="abs" style="left:20px;top:26px" width="14" height="300" viewBox="982 414 14 300"><path d="M989.500 417V711" stroke="#5e5e5e" stroke-width="1"/><path d="M989.500 416.500L986.500 422.500H992.500Z" fill="#2b2b2b" stroke="#6a6a6a" stroke-width=".8"/><rect x="990" y="497" width="6" height="163" fill="#6d6392"/><path d="M990 492L996 497V505L990 498Z" fill="#8d8a3c"/><path d="M990 655L996 662V680H990Z" fill="#3f7d3a"/></svg>
  <div class="abs" style="left:13px;top:349px;width:9px;height:3px;background:#7f7f00"></div>
  <div class="abs" style="left:25px;top:345.5px;font-size:11px;line-height:12px;color:#f2f2f2">c44</div>
  <div class="abs" style="left:13px;top:365px;width:9px;height:3px;background:#26c6a6"></div>
  <div class="abs" style="left:25px;top:361.5px;font-size:11px;line-height:12px;color:#f2f2f2">c44</div>
  <div class="abs" style="left:13px;top:381.1px;width:9px;height:3px;background:#b00000"></div>
  <div class="abs" style="left:25px;top:377.6px;font-size:11px;line-height:12px;color:#f2f2f2">c44</div>
  <div class="abs" style="left:13px;top:397.2px;width:9px;height:3px;background:#ffee66"></div>
  <div class="abs" style="left:25px;top:393.7px;font-size:11px;line-height:12px;color:#f2f2f2">c44</div>
  <div class="abs" style="left:13px;top:412.9px;width:9px;height:3px;background:#3355cc"></div>
  <div class="abs" style="left:25px;top:409.4px;font-size:11px;line-height:12px;color:#f2f2f2">c44</div>
</div>

<!-- ============ WIDGET: bottom ============ -->
<div class="w" style="left:166px;top:826px;width:860px;height:60px">
  <div class="wh" style="top:6px">数据概览</div>
</div>

</body>
</html>
